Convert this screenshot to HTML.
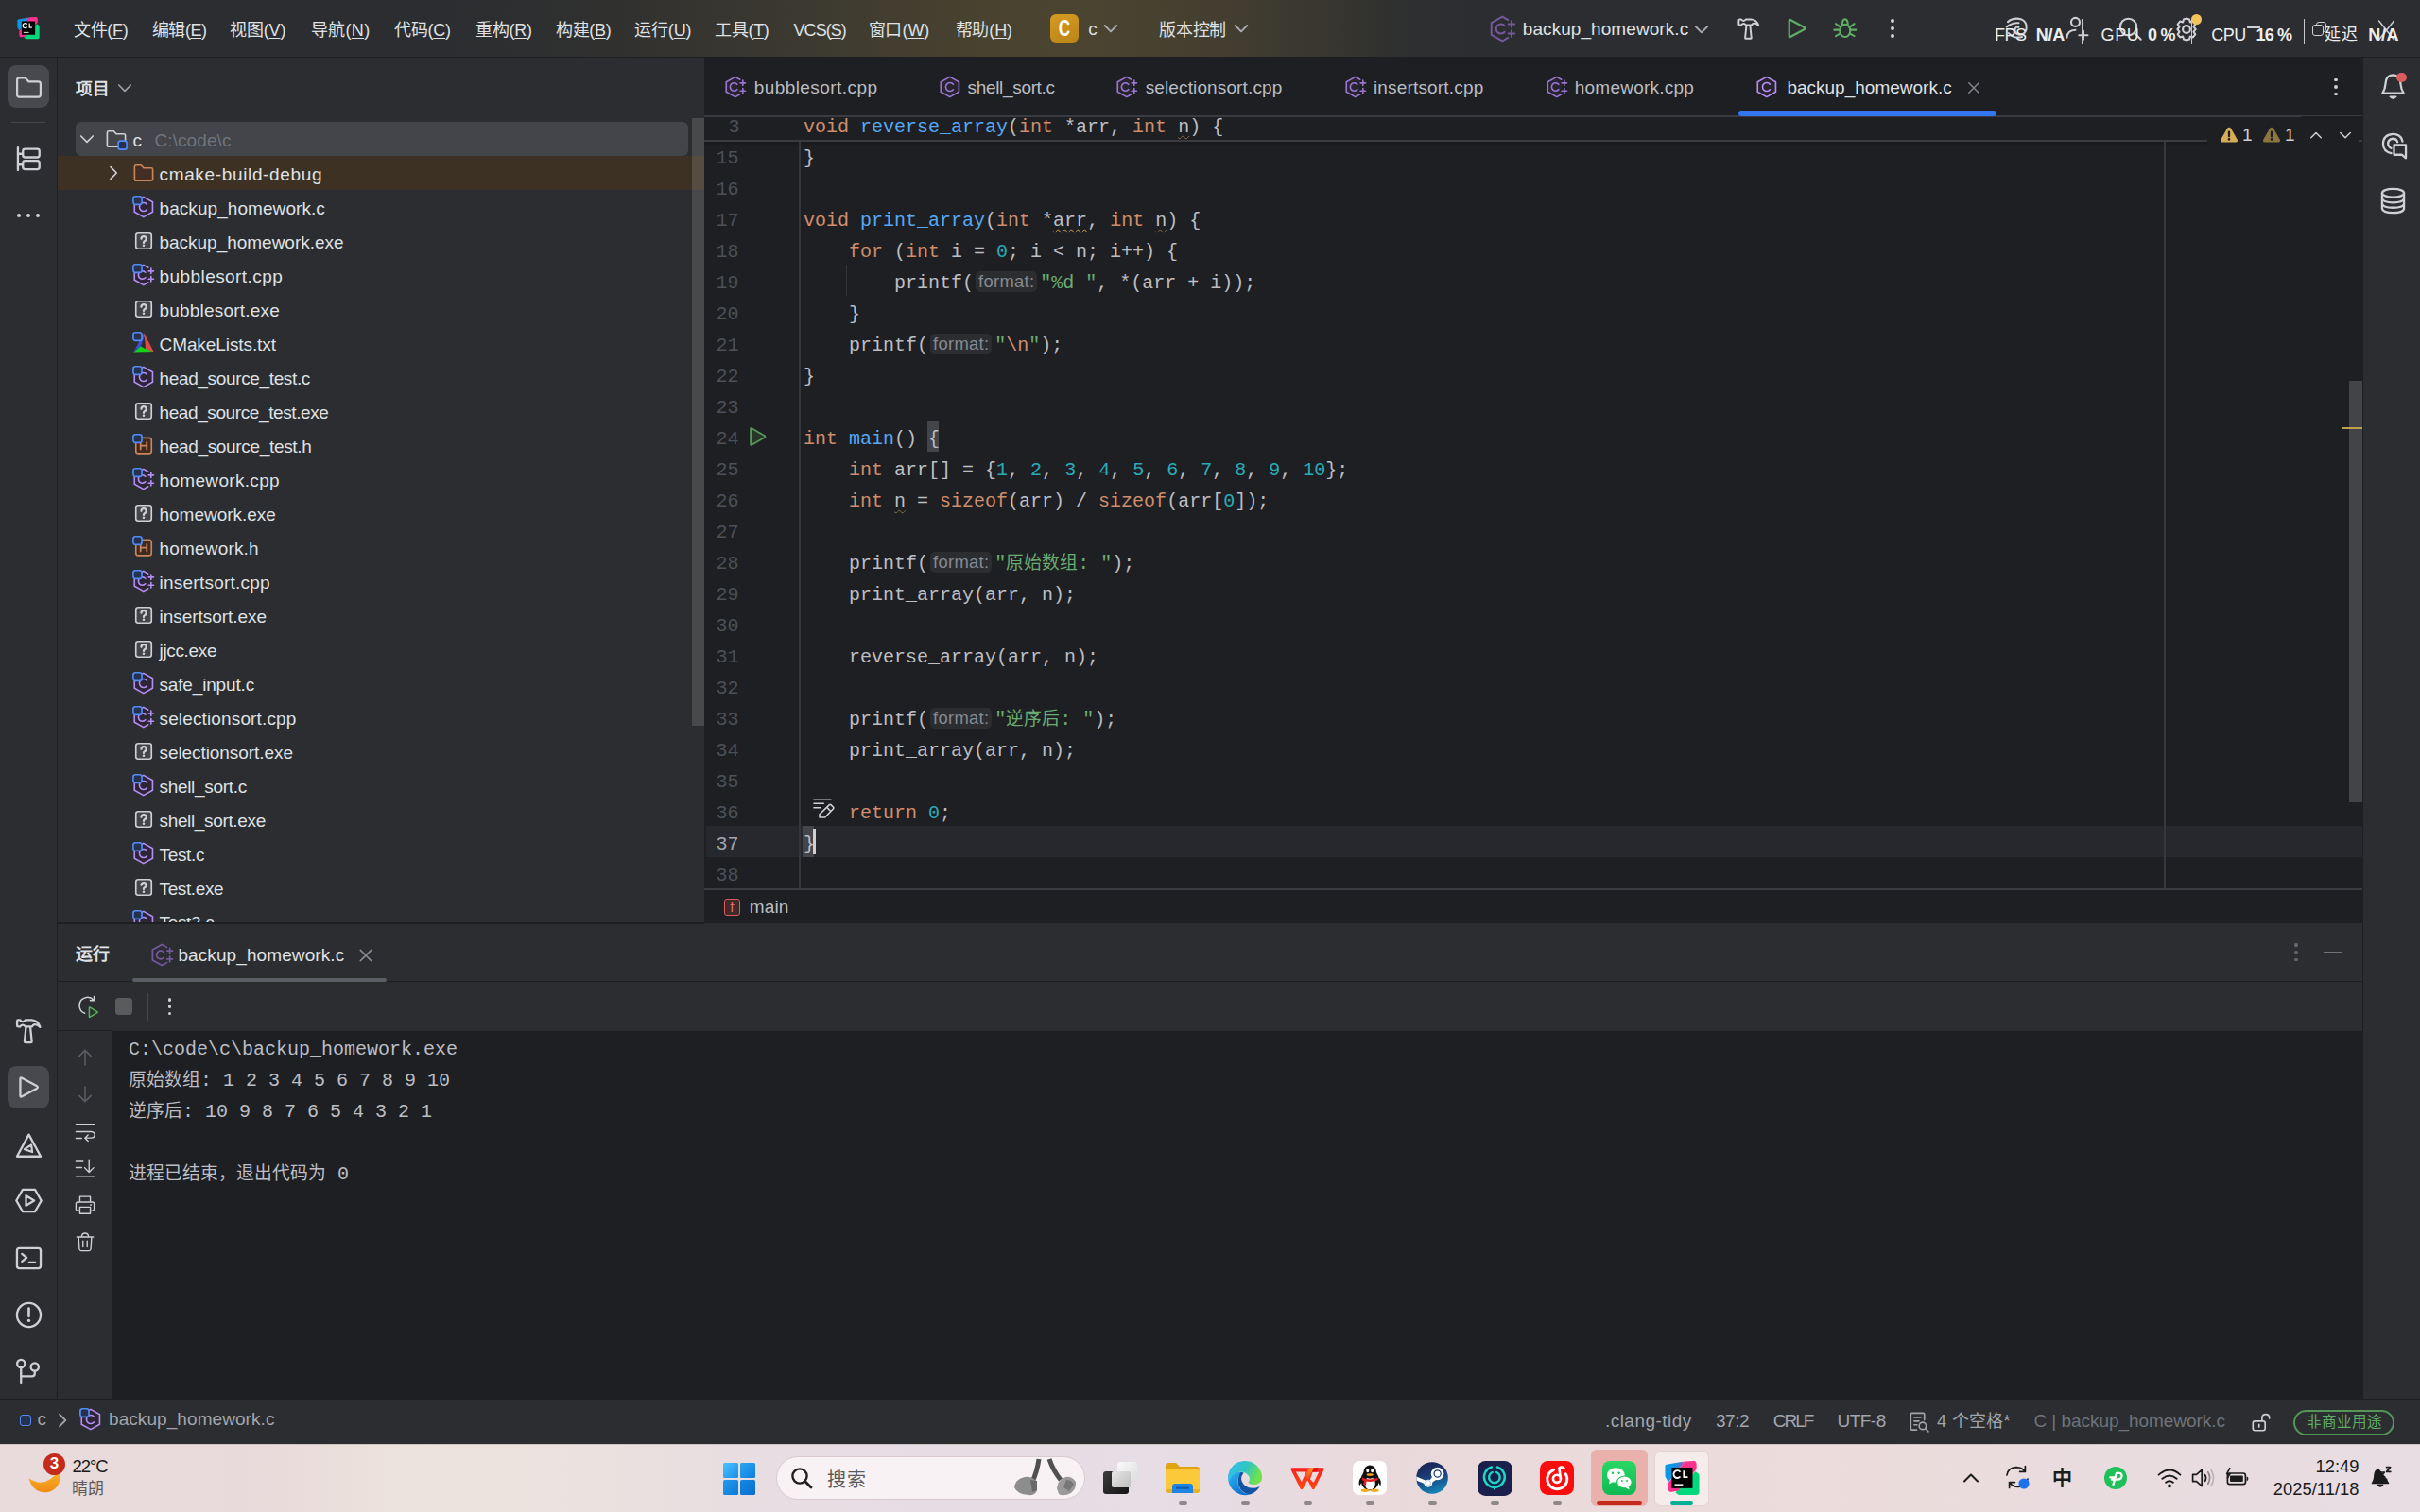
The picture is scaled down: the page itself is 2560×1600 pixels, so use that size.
<!DOCTYPE html>
<html lang="zh-CN"><head><meta charset="utf-8"><title>c – backup_homework.c</title>
<style>
html,body{margin:0;padding:0;}
body{width:2560px;height:1600px;overflow:hidden;background:#2b2d30;font-family:"Liberation Sans",sans-serif;font-size:19px;color:#dfe1e5;}
#root{position:relative;width:2560px;height:1600px;overflow:hidden;}
#root div,#root svg{position:absolute;}
#root svg{overflow:visible;}
.t{white-space:pre;}
.t span{position:static;}
u{text-decoration:underline;text-underline-offset:2px;text-decoration-thickness:1.3px;}
.code .k{color:#cf8e6d;}
.code .f{color:#56a8f5;}
.code .n{color:#2aacb8;}
.code .s{color:#6aab73;}
.code .cj{color:#6aab73;}
.cj{font-size:18.8px;}
.code .w1{text-decoration:underline wavy #c9a84a;text-decoration-thickness:1.2px;text-underline-offset:3px;}
.code .w2{text-decoration:underline wavy #857042;text-decoration-thickness:1.2px;text-underline-offset:3px;}
.hint{display:inline-block;width:65px;height:22.6px;line-height:22.6px;margin:0 3px 0 2.2px;background:#2b2d30;border-radius:5px;color:#868a91;font-family:"Liberation Sans",sans-serif;font-size:18.4px;text-align:center;vertical-align:1.5px;letter-spacing:0.3px;}
</style></head>
<body><div id="root">
<!-- ===== title / main toolbar ===== -->
<div style="left:0px;top:0px;width:2560px;height:60px;background:linear-gradient(90deg,#2b2d30 0,#2b2d30 470px,#30302f 640px,#3b3930 840px,#48422f 1040px,#4a4430 1150px,#433e30 1290px,#37362f 1410px,#2e2f30 1490px,#2b2d30 1560px);"></div>
<div style="left:0px;top:60px;width:2560px;height:1px;background:#1e1f22;"></div>
<svg style="left:18px;top:18px;" width="24" height="24" viewBox="0 0 24 24"><defs><linearGradient id="clbm" x1="0.55" y1="0" x2="1" y2="0.1"><stop offset="0" stop-color="#0a98e6"/><stop offset="1" stop-color="#c24bb0"/></linearGradient></defs><path d="M21 7.2 L23.2 8.8 Q23.7 9.3 23.7 10 V21.6 Q23.6 23.2 22 23.35 H10 Q9 23.3 8.4 22.6 L7.4 21.6 Z" fill="#04d87c"/><path d="M13.9 0.27 L20.2 0 Q21.2 0.1 21.6 1.2 Q21.9 2 21.8 5.6 L9.4 20.4 L4.8 21.3 Q2.6 21.4 2.4 19.4 V15 Z" fill="#ff318c"/><path d="M1.2 2.4 L13.9 0.27 L2.56 14.4 L0.7 11.4 Q0.3 10.8 0.3 10 V3.6 Q0.3 2.6 1.2 2.4 Z" fill="url(#clbm)"/><rect x="4.83" y="4.5" width="14.3" height="14.2" fill="#000"/><path d="M10.7 7.6 A2.55 2.55 0 1 0 10.7 10.7" fill="none" stroke="#fff" stroke-width="1.2"/><path d="M13.2 6.6 V11.1 H15.9" fill="none" stroke="#fff" stroke-width="1.2"/><rect x="6.8" y="15.85" width="5.8" height="0.95" fill="#fff"/></svg>
<div class="t" style="left:78px;top:1.5px;height:60px;line-height:60px;font-size:18px;letter-spacing:-0.317px;color:#dfe1e5;">文件(<u>F</u>)</div>
<div class="t" style="left:160.8px;top:1.5px;height:60px;line-height:60px;font-size:18px;letter-spacing:-0.460px;color:#dfe1e5;">编辑(<u>E</u>)</div>
<div class="t" style="left:242.9px;top:1.5px;height:60px;line-height:60px;font-size:18px;letter-spacing:-0.100px;color:#dfe1e5;">视图(<u>V</u>)</div>
<div class="t" style="left:328.8px;top:1.5px;height:60px;line-height:60px;font-size:18px;letter-spacing:0.340px;color:#dfe1e5;">导航(<u>N</u>)</div>
<div class="t" style="left:417.2px;top:1.5px;height:60px;line-height:60px;font-size:18px;letter-spacing:-0.300px;color:#dfe1e5;">代码(<u>C</u>)</div>
<div class="t" style="left:503px;top:1.5px;height:60px;line-height:60px;font-size:18px;letter-spacing:-0.260px;color:#dfe1e5;">重构(<u>R</u>)</div>
<div class="t" style="left:587.8px;top:1.5px;height:60px;line-height:60px;font-size:18px;letter-spacing:-0.260px;color:#dfe1e5;">构建(<u>B</u>)</div>
<div class="t" style="left:671px;top:1.5px;height:60px;line-height:60px;font-size:18px;letter-spacing:-0.120px;color:#dfe1e5;">运行(<u>U</u>)</div>
<div class="t" style="left:756.3px;top:1.5px;height:60px;line-height:60px;font-size:18px;letter-spacing:-0.377px;color:#dfe1e5;">工具(<u>T</u>)</div>
<div class="t" style="left:839.6px;top:1.5px;height:60px;line-height:60px;font-size:18px;letter-spacing:-0.986px;color:#dfe1e5;">VCS(<u>S</u>)</div>
<div class="t" style="left:918.5px;top:1.5px;height:60px;line-height:60px;font-size:18px;letter-spacing:-0.037px;color:#dfe1e5;">窗口(<u>W</u>)</div>
<div class="t" style="left:1010.5px;top:1.5px;height:60px;line-height:60px;font-size:18px;letter-spacing:-0.100px;color:#dfe1e5;">帮助(<u>H</u>)</div>
<div style="left:1111px;top:15px;width:30px;height:30px;border-radius:6px;background:linear-gradient(160deg,#d59a22,#bb8416);"></div>
<div class="t" style="left:1111px;top:15px;height:30px;line-height:30px;font-size:23px;font-weight:700;width:30px;text-align:center;color:#fff;transform:scaleX(.74);">C</div>
<div class="t" style="left:1151.3px;top:1px;height:60px;line-height:60px;color:#dfe1e5;">c</div>
<svg style="left:1162.5px;top:17.8px;" width="24" height="24" viewBox="0 0 16 16"><path d="M3.8 6 L8 10.2 L12.2 6" fill="none" stroke="#a8abb2" stroke-width="1.25" stroke-linecap="round" stroke-linejoin="round" /></svg>
<div class="t" style="left:1226.2px;top:1.5px;height:60px;line-height:60px;font-size:18px;letter-spacing:-0.300px;color:#dfe1e5;">版本控制</div>
<svg style="left:1301px;top:17.8px;" width="24" height="24" viewBox="0 0 16 16"><path d="M3.8 6 L8 10.2 L12.2 6" fill="none" stroke="#a8abb2" stroke-width="1.25" stroke-linecap="round" stroke-linejoin="round" /></svg>
<svg style="left:1575px;top:15.5px;" width="29" height="29" viewBox="0 0 16 16"><path d="M11.2 2.8 L7.9 0.9 L1.5 4.5 V11.5 L7.9 15.1 L11.2 13.2" stroke="#73599c" stroke-width="1.1" stroke-linecap="round" stroke-linejoin="round"  fill="none"/><path d="M9.2 6.2 A2.8 2.8 0 1 0 9.2 9.8" fill="none" stroke="#73599c" stroke-width="1.1" stroke-linecap="round" stroke-linejoin="round" /><path d="M11.4 5.2 H15 M13.2 3.4 V7 M11.4 10.8 H15 M13.2 9 V12.6" fill="none" stroke="#73599c" stroke-width="1.1" stroke-linecap="round" stroke-linejoin="round" /></svg>
<div class="t" style="left:1610.8px;top:1px;height:60px;line-height:60px;letter-spacing:0.067px;color:#dfe1e5;">backup_homework.c</div>
<svg style="left:1788px;top:18.5px;" width="24" height="24" viewBox="0 0 16 16"><path d="M3.8 6 L8 10.2 L12.2 6" fill="none" stroke="#a8abb2" stroke-width="1.25" stroke-linecap="round" stroke-linejoin="round" /></svg>
<svg style="left:1835px;top:14.5px;" width="30" height="30" viewBox="0 0 20 20"><path d="M2.9 4.3 Q2.9 3.6 3.6 3.6 H4.7 Q5.3 4.7 6.3 4.7 Q7.3 4.7 7.9 3.6 H11.6 Q15.6 3.9 16.8 7.9 Q15 6.3 13.5 6.4 Q12.4 6.6 12 7.7 H7.9 Q7.3 6.6 6.3 6.6 Q5.3 6.6 4.7 7.7 H3.6 Q2.9 7.7 2.9 7 Z" fill="none" stroke="#ced0d6" stroke-width="1.3" stroke-linecap="round" stroke-linejoin="round" /><path d="M8.3 7.9 L7.4 16.6 Q7.4 17.2 8 17.2 H11.2 Q11.8 17.2 11.8 16.6 L10.9 7.9" fill="none" stroke="#ced0d6" stroke-width="1.3" stroke-linecap="round" stroke-linejoin="round" /></svg>
<svg style="left:1886px;top:15px;" width="30" height="30" viewBox="0 0 20 20"><path d="M4.5 4.7 Q4.5 3.5 5.6 4.1 L15.2 9.3 Q16.2 10 15.2 10.7 L5.6 15.9 Q4.5 16.5 4.5 15.3 Z" fill="none" stroke="#5fad65" stroke-width="1.5" stroke-linecap="round" stroke-linejoin="round" /></svg>
<svg style="left:1936.5px;top:15px;" width="30" height="30" viewBox="0 0 20 20"><ellipse cx="9.85" cy="11.6" rx="3.7" ry="4.4" fill="none" stroke="#5fad65" stroke-width="1.4" stroke-linecap="round" stroke-linejoin="round" /><path d="M7.9 7.3 Q7.9 3.6 9.85 3.6 Q11.8 3.6 11.8 7.3 M6.3 8.9 L3.3 6.8 M6.3 11.1 H2.2 M6.5 13.6 L3.3 15.4 M13.4 8.9 L16.4 6.8 M13.4 11.1 H17.5 M13.2 13.6 L16.4 15.4" fill="none" stroke="#5fad65" stroke-width="1.4" stroke-linecap="round" stroke-linejoin="round" /></svg>
<div style="left:2000.1px;top:19.8px;width:4.4px;height:4.4px;border-radius:50%;background:#ced0d6;"></div>
<div style="left:2000.1px;top:27.900000000000002px;width:4.4px;height:4.4px;border-radius:50%;background:#ced0d6;"></div>
<div style="left:2000.1px;top:36.0px;width:4.4px;height:4.4px;border-radius:50%;background:#ced0d6;"></div>
<svg style="left:2118px;top:15px;" width="30" height="30" viewBox="0 0 20 20"><path d="M4 5.4 Q8 2 13.6 3.6 Q17.8 5.6 17 10.6 Q16 14.6 12 14.4 Q8.6 13.8 9 10.8 Q9.6 8.6 11.6 9.2 M3.2 9 Q7 5.8 11.6 6.2 M4.6 13.4 Q8.4 17.6 14 16" fill="none" stroke="#ced0d6" stroke-width="1.4" stroke-linecap="round" stroke-linejoin="round" /></svg>
<svg style="left:2182px;top:15px;" width="30" height="30" viewBox="0 0 20 20"><circle cx="9" cy="5.6" r="3" fill="none" stroke="#ced0d6" stroke-width="1.4" stroke-linecap="round" stroke-linejoin="round" /><path d="M3 16.4 Q3.4 11.4 9 11.2 M11.6 14.8 H17.6 M14.6 11.8 V17.8" fill="none" stroke="#ced0d6" stroke-width="1.4" stroke-linecap="round" stroke-linejoin="round" /></svg>
<svg style="left:2238px;top:15px;" width="30" height="30" viewBox="0 0 20 20"><circle cx="9" cy="9" r="5.8" fill="none" stroke="#ced0d6" stroke-width="1.4" stroke-linecap="round" stroke-linejoin="round" /><path d="M13.2 13.2 L17.8 17.8" fill="none" stroke="#ced0d6" stroke-width="1.4" stroke-linecap="round" stroke-linejoin="round" /></svg>
<svg style="left:2298px;top:16px;" width="30" height="30" viewBox="0 0 20 20"><path d="M10 2.4 L12 3 L12.6 5 L14.6 4.4 L16.2 6.4 L15 8.2 L16.4 10 L15 11.8 L16.2 13.6 L14.6 15.6 L12.6 15 L12 17 L10 17.6 L8 17 L7.4 15 L5.4 15.6 L3.8 13.6 L5 11.8 L3.6 10 L5 8.2 L3.8 6.4 L5.4 4.4 L7.4 5 L8 3 Z" fill="none" stroke="#ced0d6" stroke-width="1.4" stroke-linecap="round" stroke-linejoin="round" /><circle cx="10" cy="10" r="2.6" fill="none" stroke="#ced0d6" stroke-width="1.4" stroke-linecap="round" stroke-linejoin="round" /></svg>
<div style="left:2317.5px;top:15px;width:11px;height:11px;border-radius:50%;background:#f2c55c;"></div>
<div style="left:2376.6px;top:28.4px;width:14px;height:1.4px;background:#ced0d6;"></div>
<div style="left:2449.5px;top:22.6px;width:11.5px;height:11.5px;border:1.4px solid #ced0d6;border-radius:3px;box-sizing:border-box;"></div>
<div style="left:2446px;top:26px;width:11.5px;height:11.5px;border:1.4px solid #ced0d6;border-radius:3px;box-sizing:border-box;background:#2b2d30;"></div>
<svg style="left:2512px;top:20px;" width="24" height="24" viewBox="0 0 24 24"><path d="M4.5 2 L20.5 22 M20.5 2 L4.5 22" fill="none" stroke="#ced0d6" stroke-width="1.4" stroke-linecap="round" stroke-linejoin="round" /></svg>
<div class="t" style="left:2110px;top:13.5px;height:46px;line-height:46px;font-size:18px;letter-spacing:-0.505px;color:#ededed;">FPS</div>
<div class="t" style="left:2153.8px;top:13.5px;height:46px;line-height:46px;font-size:18px;font-weight:700;letter-spacing:-0.267px;color:#ededed;">N/A</div>
<div style="left:2202px;top:20px;width:1.4px;height:27px;background:#c8c8c8;"></div>
<div class="t" style="left:2222.5px;top:13.5px;height:46px;line-height:46px;font-size:18px;letter-spacing:0.661px;color:#ededed;">GPU</div>
<div class="t" style="left:2272px;top:13.5px;height:46px;line-height:46px;font-size:18px;font-weight:700;letter-spacing:-0.744px;color:#ededed;">0 %</div>
<div style="left:2318px;top:20px;width:1.4px;height:27px;background:#c8c8c8;"></div>
<div class="t" style="left:2339.3px;top:13.5px;height:46px;line-height:46px;font-size:18px;letter-spacing:-0.572px;color:#ededed;">CPU</div>
<div class="t" style="left:2386.5px;top:13.5px;height:46px;line-height:46px;font-size:18px;font-weight:700;letter-spacing:-0.833px;color:#ededed;">16 %</div>
<div style="left:2437px;top:20px;width:1.4px;height:27px;background:#c8c8c8;"></div>
<div class="t" style="left:2459.4px;top:13.5px;height:46px;line-height:46px;font-size:17px;letter-spacing:0.150px;color:#ededed;">延迟</div>
<div class="t" style="left:2505.2px;top:13.5px;height:46px;line-height:46px;font-size:18px;font-weight:700;letter-spacing:0.700px;color:#ededed;">N/A</div>
<!-- ===== left tool strip ===== -->
<div style="left:0px;top:61px;width:60px;height:1419px;background:#2b2d30;"></div>
<div style="left:60px;top:61px;width:1px;height:1419px;background:#1e1f22;"></div>
<div style="left:8px;top:69px;width:44px;height:45px;background:#47494e;border-radius:9px;"></div>
<svg style="left:14.5px;top:76.5px;" width="31" height="31" viewBox="0 0 20 20"><path d="M2 5 Q2 3.5 3.5 3.5 H7.6 L9.8 6 H16.5 Q18 6 18 7.5 V15 Q18 16.5 16.5 16.5 H3.5 Q2 16.5 2 15 Z" fill="none" stroke="#ced0d6" stroke-width="1.4" stroke-linecap="round" stroke-linejoin="round" /></svg>
<div style="left:12px;top:129px;width:36px;height:1px;background:#43454a;"></div>
<svg style="left:13.5px;top:151.5px;" width="33" height="33" viewBox="0 0 20 20"><path d="M3 2.5 V17 M3 6.5 H6 M3 13.5 H6" fill="none" stroke="#ced0d6" stroke-width="1.4" stroke-linecap="round" stroke-linejoin="round" /><rect x="6.2" y="3.4" width="10.6" height="5.4" rx="1.4" fill="none" stroke="#ced0d6" stroke-width="1.4" stroke-linecap="round" stroke-linejoin="round" /><rect x="6.2" y="11" width="10.6" height="5.4" rx="1.4" fill="none" stroke="#ced0d6" stroke-width="1.4" stroke-linecap="round" stroke-linejoin="round" /></svg>
<div style="left:17.8px;top:225.7px;width:4.6px;height:4.6px;border-radius:50%;background:#ced0d6;"></div>
<div style="left:27.7px;top:225.7px;width:4.6px;height:4.6px;border-radius:50%;background:#ced0d6;"></div>
<div style="left:37.5px;top:225.7px;width:4.6px;height:4.6px;border-radius:50%;background:#ced0d6;"></div>
<svg style="left:12.5px;top:1072.5px;" width="35" height="35" viewBox="0 0 20 20"><path d="M2.9 4.3 Q2.9 3.6 3.6 3.6 H4.7 Q5.3 4.7 6.3 4.7 Q7.3 4.7 7.9 3.6 H11.6 Q15.6 3.9 16.8 7.9 Q15 6.3 13.5 6.4 Q12.4 6.6 12 7.7 H7.9 Q7.3 6.6 6.3 6.6 Q5.3 6.6 4.7 7.7 H3.6 Q2.9 7.7 2.9 7 Z" fill="none" stroke="#ced0d6" stroke-width="1.3" stroke-linecap="round" stroke-linejoin="round" /><path d="M8.3 7.9 L7.4 16.6 Q7.4 17.2 8 17.2 H11.2 Q11.8 17.2 11.8 16.6 L10.9 7.9" fill="none" stroke="#ced0d6" stroke-width="1.3" stroke-linecap="round" stroke-linejoin="round" /></svg>
<div style="left:8px;top:1128px;width:44px;height:45px;background:#47494e;border-radius:9px;"></div>
<svg style="left:14px;top:1134px;" width="33" height="33" viewBox="0 0 20 20"><path d="M4.5 4.7 Q4.5 3.5 5.6 4.1 L15.2 9.3 Q16.2 10 15.2 10.7 L5.6 15.9 Q4.5 16.5 4.5 15.3 Z" fill="none" stroke="#ced0d6" stroke-width="1.4" stroke-linecap="round" stroke-linejoin="round" /></svg>
<svg style="left:13.5px;top:1195.5px;" width="33" height="33" viewBox="0 0 20 20"><path d="M10 2.8 L17.6 16.8 H2.4 Z" fill="none" stroke="#ced0d6" stroke-width="1.4" stroke-linecap="round" stroke-linejoin="round" /><path d="M11.6 9.4 L7.2 12.2 L12.2 14 Z" fill="none" stroke="#ced0d6" stroke-width="1.3" stroke-linecap="round" stroke-linejoin="round" /></svg>
<svg style="left:13.5px;top:1254px;" width="33" height="33" viewBox="0 0 20 20"><path d="M6 3 H14 L18 10 L14 17 H6 L2 10 Z" fill="none" stroke="#ced0d6" stroke-width="1.4" stroke-linecap="round" stroke-linejoin="round" /><path d="M8.2 6.8 L13.4 10 L8.2 13.2 Z" fill="none" stroke="#ced0d6" stroke-width="1.4" stroke-linecap="round" stroke-linejoin="round" /></svg>
<svg style="left:13.5px;top:1314.5px;" width="33" height="33" viewBox="0 0 20 20"><rect x="2.4" y="3.6" width="15.2" height="12.8" rx="1.6" fill="none" stroke="#ced0d6" stroke-width="1.4" stroke-linecap="round" stroke-linejoin="round" /><path d="M5.6 7.2 L8.6 9.6 L5.6 12 M10.2 12.6 H14" fill="none" stroke="#ced0d6" stroke-width="1.4" stroke-linecap="round" stroke-linejoin="round" /></svg>
<svg style="left:13.5px;top:1374.5px;" width="33" height="33" viewBox="0 0 20 20"><circle cx="10" cy="10" r="7.6" fill="none" stroke="#ced0d6" stroke-width="1.4" stroke-linecap="round" stroke-linejoin="round" /><path d="M10 5.8 V10.8" fill="none" stroke="#ced0d6" stroke-width="1.6" stroke-linecap="round" stroke-linejoin="round" /><circle cx="10" cy="13.6" r="1" fill="#ced0d6"/></svg>
<svg style="left:12.5px;top:1434.5px;" width="33" height="33" viewBox="0 0 20 20"><circle cx="5.6" cy="4.9" r="2.5" fill="none" stroke="#ced0d6" stroke-width="1.4" stroke-linecap="round" stroke-linejoin="round" /><circle cx="14.4" cy="7" r="2.5" fill="none" stroke="#ced0d6" stroke-width="1.4" stroke-linecap="round" stroke-linejoin="round" /><path d="M5.6 7.5 V17.6 M14.4 9.6 V11.2 Q14.4 13 12.6 13 H5.8" fill="none" stroke="#ced0d6" stroke-width="1.4" stroke-linecap="round" stroke-linejoin="round" /></svg>
<!-- ===== project tool window ===== -->
<div style="left:61px;top:61px;width:684px;height:915px;background:#2b2d30;overflow:hidden;">
<div class="t" style="left:19px;top:14.5px;height:36px;line-height:36px;font-size:17.6px;font-weight:700;color:#dfe1e5;">项目</div>
<svg style="left:59px;top:20px;" width="24" height="24" viewBox="0 0 16 16"><path d="M3.8 6 L8 10.2 L12.2 6" fill="none" stroke="#9da0a8" stroke-width="1.1" stroke-linecap="round" stroke-linejoin="round" /></svg>
<div style="left:18.5px;top:68px;width:648px;height:36px;background:#43454a;border-radius:6px;"></div>
<svg style="left:19px;top:74px;" width="24" height="24" viewBox="0 0 16 16"><path d="M3.8 6 L8 10.2 L12.2 6" fill="none" stroke="#ced0d6" stroke-width="1.1" stroke-linecap="round" stroke-linejoin="round" /></svg>
<svg style="left:50px;top:74px;" width="24" height="24" viewBox="0 0 16 16"><path d="M1.6 3.6 Q1.6 2.5 2.7 2.5 H6.2 L8 4.5 H13.3 Q14.4 4.5 14.4 5.6 V12.4 Q14.4 13.5 13.3 13.5 H2.7 Q1.6 13.5 1.6 12.4 Z" fill="none" stroke="#ced0d6" stroke-width="1.1" stroke-linejoin="round"/><rect x="9.4" y="9.4" width="6" height="6" rx="1.6" fill="#25324d" stroke="#548af7" stroke-width="1.1"/></svg>
<div class="t" style="left:79.6px;top:69.69999999999999px;height:36px;line-height:36px;color:#dfe1e5;">c</div>
<div class="t" style="left:102.5px;top:69.69999999999999px;height:36px;line-height:36px;letter-spacing:0.082px;color:#6f737a;">C:\code\c</div>
<div style="left:0px;top:104px;width:684px;height:36px;background:#3d3124;"></div>
<svg style="left:46.5px;top:110px;" width="24" height="24" viewBox="0 0 16 16"><path d="M6 3.8 L10.2 8 L6 12.2" fill="none" stroke="#ced0d6" stroke-width="1.1" stroke-linecap="round" stroke-linejoin="round" /></svg>
<svg style="left:78.6px;top:110px;" width="24" height="24" viewBox="0 0 16 16"><path d="M1.6 3.6 Q1.6 2.5 2.7 2.5 H6.2 L8 4.5 H13.3 Q14.4 4.5 14.4 5.6 V12.4 Q14.4 13.5 13.3 13.5 H2.7 Q1.6 13.5 1.6 12.4 Z" fill="#422e25" stroke="#c9855c" stroke-width="1.1" stroke-linejoin="round"/></svg>
<div class="t" style="left:107.5px;top:105.69999999999999px;height:36px;line-height:36px;letter-spacing:0.653px;color:#dfe1e5;">cmake-build-debug</div>
<svg style="left:78.80000000000001px;top:146px;" width="24" height="24" viewBox="0 0 16 16"><path d="M7.9 0.9 L14.3 4.5 V11.5 L7.9 15.1 L1.5 11.5 V4.5 Z" stroke="#b58cf0" stroke-width="1.1" stroke-linecap="round" stroke-linejoin="round"  fill="#2b2535"/><path d="M10.3 6.1 A3 3 0 1 0 10.3 9.9" fill="none" stroke="#b58cf0" stroke-width="1.1" stroke-linecap="round" stroke-linejoin="round" /><rect x="0.6" y="0.5" width="6.1" height="5.7" rx="1.6" fill="#25324d" stroke="#548af7" stroke-width="1.1"/></svg>
<div class="t" style="left:107.5px;top:141.7px;height:36px;line-height:36px;letter-spacing:0.067px;color:#dfe1e5;">backup_homework.c</div>
<svg style="left:78.80000000000001px;top:182px;" width="24" height="24" viewBox="0 0 16 16"><rect x="2.5" y="2.5" width="11" height="11" rx="1.6" fill="#43454a" stroke="#ced0d6" stroke-width="1.1"/><path d="M6.3 6.5 A1.75 1.75 0 1 1 8.6 8.1 Q8 8.4 8 9.3" fill="none" stroke="#ced0d6" stroke-width="1.5" stroke-linecap="round" stroke-linejoin="round" /><circle cx="8" cy="11.2" r="0.85" fill="#ced0d6"/></svg>
<div class="t" style="left:107.5px;top:177.7px;height:36px;line-height:36px;letter-spacing:-0.021px;color:#dfe1e5;">backup_homework.exe</div>
<svg style="left:78.80000000000001px;top:218px;" width="24" height="24" viewBox="0 0 16 16"><path d="M11.2 2.8 L7.9 0.9 L1.5 4.5 V11.5 L7.9 15.1 L11.2 13.2" stroke="#b58cf0" stroke-width="1.1" stroke-linecap="round" stroke-linejoin="round"  fill="#2b2535"/><path d="M9.2 6.2 A2.8 2.8 0 1 0 9.2 9.8" fill="none" stroke="#b58cf0" stroke-width="1.1" stroke-linecap="round" stroke-linejoin="round" /><path d="M11.4 5.2 H15 M13.2 3.4 V7 M11.4 10.8 H15 M13.2 9 V12.6" fill="none" stroke="#b58cf0" stroke-width="1.1" stroke-linecap="round" stroke-linejoin="round" /><rect x="0.6" y="0.5" width="6.1" height="5.7" rx="1.6" fill="#25324d" stroke="#548af7" stroke-width="1.1"/></svg>
<div class="t" style="left:107.5px;top:213.7px;height:36px;line-height:36px;letter-spacing:0.432px;color:#dfe1e5;">bubblesort.cpp</div>
<svg style="left:78.80000000000001px;top:254px;" width="24" height="24" viewBox="0 0 16 16"><rect x="2.5" y="2.5" width="11" height="11" rx="1.6" fill="#43454a" stroke="#ced0d6" stroke-width="1.1"/><path d="M6.3 6.5 A1.75 1.75 0 1 1 8.6 8.1 Q8 8.4 8 9.3" fill="none" stroke="#ced0d6" stroke-width="1.5" stroke-linecap="round" stroke-linejoin="round" /><circle cx="8" cy="11.2" r="0.85" fill="#ced0d6"/></svg>
<div class="t" style="left:107.5px;top:249.7px;height:36px;line-height:36px;letter-spacing:0.203px;color:#dfe1e5;">bubblesort.exe</div>
<svg style="left:78.80000000000001px;top:290px;" width="24" height="24" viewBox="0 0 16 16"><polygon points="8.1,0.6 0.6,15 6,10.2 8.6,3.5" fill="#3b4fd8"/><polygon points="8.1,0.6 15.4,14.6 9.2,12.2" fill="#e04a4a"/><polygon points="0.6,15 15.4,14.6 6,10.2" fill="#17d317"/><polygon points="8.6,3.5 6,10.2 9.2,12.2" fill="#2b2d30"/><rect x="0.6" y="0.5" width="6.1" height="5.7" rx="1.6" fill="#25324d" stroke="#548af7" stroke-width="1.1"/></svg>
<div class="t" style="left:107.5px;top:285.7px;height:36px;line-height:36px;letter-spacing:-0.085px;color:#dfe1e5;">CMakeLists.txt</div>
<svg style="left:78.80000000000001px;top:326px;" width="24" height="24" viewBox="0 0 16 16"><path d="M7.9 0.9 L14.3 4.5 V11.5 L7.9 15.1 L1.5 11.5 V4.5 Z" stroke="#b58cf0" stroke-width="1.1" stroke-linecap="round" stroke-linejoin="round"  fill="#2b2535"/><path d="M10.3 6.1 A3 3 0 1 0 10.3 9.9" fill="none" stroke="#b58cf0" stroke-width="1.1" stroke-linecap="round" stroke-linejoin="round" /><rect x="0.6" y="0.5" width="6.1" height="5.7" rx="1.6" fill="#25324d" stroke="#548af7" stroke-width="1.1"/></svg>
<div class="t" style="left:107.5px;top:321.7px;height:36px;line-height:36px;letter-spacing:-0.352px;color:#dfe1e5;">head_source_test.c</div>
<svg style="left:78.80000000000001px;top:362px;" width="24" height="24" viewBox="0 0 16 16"><rect x="2.5" y="2.5" width="11" height="11" rx="1.6" fill="#43454a" stroke="#ced0d6" stroke-width="1.1"/><path d="M6.3 6.5 A1.75 1.75 0 1 1 8.6 8.1 Q8 8.4 8 9.3" fill="none" stroke="#ced0d6" stroke-width="1.5" stroke-linecap="round" stroke-linejoin="round" /><circle cx="8" cy="11.2" r="0.85" fill="#ced0d6"/></svg>
<div class="t" style="left:107.5px;top:357.7px;height:36px;line-height:36px;letter-spacing:-0.398px;color:#dfe1e5;">head_source_test.exe</div>
<svg style="left:78.80000000000001px;top:398px;" width="24" height="24" viewBox="0 0 16 16"><rect x="2.5" y="2.9" width="11" height="11" rx="1.8" fill="#40291f" stroke="#c9855c" stroke-width="1.1"/><path d="M5.8 5.9 V11 M10.2 5.9 V11 M5.8 8.45 H10.2" fill="none" stroke="#c9855c" stroke-width="1.2" stroke-linecap="round" stroke-linejoin="round" /><rect x="0.6" y="0.5" width="6.1" height="5.7" rx="1.6" fill="#25324d" stroke="#548af7" stroke-width="1.1"/></svg>
<div class="t" style="left:107.5px;top:393.7px;height:36px;line-height:36px;letter-spacing:-0.328px;color:#dfe1e5;">head_source_test.h</div>
<svg style="left:78.80000000000001px;top:434px;" width="24" height="24" viewBox="0 0 16 16"><path d="M11.2 2.8 L7.9 0.9 L1.5 4.5 V11.5 L7.9 15.1 L11.2 13.2" stroke="#b58cf0" stroke-width="1.1" stroke-linecap="round" stroke-linejoin="round"  fill="#2b2535"/><path d="M9.2 6.2 A2.8 2.8 0 1 0 9.2 9.8" fill="none" stroke="#b58cf0" stroke-width="1.1" stroke-linecap="round" stroke-linejoin="round" /><path d="M11.4 5.2 H15 M13.2 3.4 V7 M11.4 10.8 H15 M13.2 9 V12.6" fill="none" stroke="#b58cf0" stroke-width="1.1" stroke-linecap="round" stroke-linejoin="round" /><rect x="0.6" y="0.5" width="6.1" height="5.7" rx="1.6" fill="#25324d" stroke="#548af7" stroke-width="1.1"/></svg>
<div class="t" style="left:107.5px;top:429.7px;height:36px;line-height:36px;letter-spacing:0.328px;color:#dfe1e5;">homework.cpp</div>
<svg style="left:78.80000000000001px;top:470px;" width="24" height="24" viewBox="0 0 16 16"><rect x="2.5" y="2.5" width="11" height="11" rx="1.6" fill="#43454a" stroke="#ced0d6" stroke-width="1.1"/><path d="M6.3 6.5 A1.75 1.75 0 1 1 8.6 8.1 Q8 8.4 8 9.3" fill="none" stroke="#ced0d6" stroke-width="1.5" stroke-linecap="round" stroke-linejoin="round" /><circle cx="8" cy="11.2" r="0.85" fill="#ced0d6"/></svg>
<div class="t" style="left:107.5px;top:465.70000000000005px;height:36px;line-height:36px;letter-spacing:-0.014px;color:#dfe1e5;">homework.exe</div>
<svg style="left:78.80000000000001px;top:506px;" width="24" height="24" viewBox="0 0 16 16"><rect x="2.5" y="2.9" width="11" height="11" rx="1.8" fill="#40291f" stroke="#c9855c" stroke-width="1.1"/><path d="M5.8 5.9 V11 M10.2 5.9 V11 M5.8 8.45 H10.2" fill="none" stroke="#c9855c" stroke-width="1.2" stroke-linecap="round" stroke-linejoin="round" /><rect x="0.6" y="0.5" width="6.1" height="5.7" rx="1.6" fill="#25324d" stroke="#548af7" stroke-width="1.1"/></svg>
<div class="t" style="left:107.5px;top:501.70000000000005px;height:36px;line-height:36px;letter-spacing:0.180px;color:#dfe1e5;">homework.h</div>
<svg style="left:78.80000000000001px;top:542px;" width="24" height="24" viewBox="0 0 16 16"><path d="M11.2 2.8 L7.9 0.9 L1.5 4.5 V11.5 L7.9 15.1 L11.2 13.2" stroke="#b58cf0" stroke-width="1.1" stroke-linecap="round" stroke-linejoin="round"  fill="#2b2535"/><path d="M9.2 6.2 A2.8 2.8 0 1 0 9.2 9.8" fill="none" stroke="#b58cf0" stroke-width="1.1" stroke-linecap="round" stroke-linejoin="round" /><path d="M11.4 5.2 H15 M13.2 3.4 V7 M11.4 10.8 H15 M13.2 9 V12.6" fill="none" stroke="#b58cf0" stroke-width="1.1" stroke-linecap="round" stroke-linejoin="round" /><rect x="0.6" y="0.5" width="6.1" height="5.7" rx="1.6" fill="#25324d" stroke="#548af7" stroke-width="1.1"/></svg>
<div class="t" style="left:107.5px;top:537.7px;height:36px;line-height:36px;letter-spacing:0.240px;color:#dfe1e5;">insertsort.cpp</div>
<svg style="left:78.80000000000001px;top:578px;" width="24" height="24" viewBox="0 0 16 16"><rect x="2.5" y="2.5" width="11" height="11" rx="1.6" fill="#43454a" stroke="#ced0d6" stroke-width="1.1"/><path d="M6.3 6.5 A1.75 1.75 0 1 1 8.6 8.1 Q8 8.4 8 9.3" fill="none" stroke="#ced0d6" stroke-width="1.5" stroke-linecap="round" stroke-linejoin="round" /><circle cx="8" cy="11.2" r="0.85" fill="#ced0d6"/></svg>
<div class="t" style="left:107.5px;top:573.7px;height:36px;line-height:36px;letter-spacing:-0.046px;color:#dfe1e5;">insertsort.exe</div>
<svg style="left:78.80000000000001px;top:614px;" width="24" height="24" viewBox="0 0 16 16"><rect x="2.5" y="2.5" width="11" height="11" rx="1.6" fill="#43454a" stroke="#ced0d6" stroke-width="1.1"/><path d="M6.3 6.5 A1.75 1.75 0 1 1 8.6 8.1 Q8 8.4 8 9.3" fill="none" stroke="#ced0d6" stroke-width="1.5" stroke-linecap="round" stroke-linejoin="round" /><circle cx="8" cy="11.2" r="0.85" fill="#ced0d6"/></svg>
<div class="t" style="left:107.5px;top:609.7px;height:36px;line-height:36px;letter-spacing:-0.332px;color:#dfe1e5;">jjcc.exe</div>
<svg style="left:78.80000000000001px;top:650px;" width="24" height="24" viewBox="0 0 16 16"><path d="M7.9 0.9 L14.3 4.5 V11.5 L7.9 15.1 L1.5 11.5 V4.5 Z" stroke="#b58cf0" stroke-width="1.1" stroke-linecap="round" stroke-linejoin="round"  fill="#2b2535"/><path d="M10.3 6.1 A3 3 0 1 0 10.3 9.9" fill="none" stroke="#b58cf0" stroke-width="1.1" stroke-linecap="round" stroke-linejoin="round" /><rect x="0.6" y="0.5" width="6.1" height="5.7" rx="1.6" fill="#25324d" stroke="#548af7" stroke-width="1.1"/></svg>
<div class="t" style="left:107.5px;top:645.7px;height:36px;line-height:36px;letter-spacing:-0.164px;color:#dfe1e5;">safe_input.c</div>
<svg style="left:78.80000000000001px;top:686px;" width="24" height="24" viewBox="0 0 16 16"><path d="M11.2 2.8 L7.9 0.9 L1.5 4.5 V11.5 L7.9 15.1 L11.2 13.2" stroke="#b58cf0" stroke-width="1.1" stroke-linecap="round" stroke-linejoin="round"  fill="#2b2535"/><path d="M9.2 6.2 A2.8 2.8 0 1 0 9.2 9.8" fill="none" stroke="#b58cf0" stroke-width="1.1" stroke-linecap="round" stroke-linejoin="round" /><path d="M11.4 5.2 H15 M13.2 3.4 V7 M11.4 10.8 H15 M13.2 9 V12.6" fill="none" stroke="#b58cf0" stroke-width="1.1" stroke-linecap="round" stroke-linejoin="round" /><rect x="0.6" y="0.5" width="6.1" height="5.7" rx="1.6" fill="#25324d" stroke="#548af7" stroke-width="1.1"/></svg>
<div class="t" style="left:107.5px;top:681.7px;height:36px;line-height:36px;letter-spacing:0.142px;color:#dfe1e5;">selectionsort.cpp</div>
<svg style="left:78.80000000000001px;top:722px;" width="24" height="24" viewBox="0 0 16 16"><rect x="2.5" y="2.5" width="11" height="11" rx="1.6" fill="#43454a" stroke="#ced0d6" stroke-width="1.1"/><path d="M6.3 6.5 A1.75 1.75 0 1 1 8.6 8.1 Q8 8.4 8 9.3" fill="none" stroke="#ced0d6" stroke-width="1.5" stroke-linecap="round" stroke-linejoin="round" /><circle cx="8" cy="11.2" r="0.85" fill="#ced0d6"/></svg>
<div class="t" style="left:107.5px;top:717.7px;height:36px;line-height:36px;letter-spacing:-0.069px;color:#dfe1e5;">selectionsort.exe</div>
<svg style="left:78.80000000000001px;top:758px;" width="24" height="24" viewBox="0 0 16 16"><path d="M7.9 0.9 L14.3 4.5 V11.5 L7.9 15.1 L1.5 11.5 V4.5 Z" stroke="#b58cf0" stroke-width="1.1" stroke-linecap="round" stroke-linejoin="round"  fill="#2b2535"/><path d="M10.3 6.1 A3 3 0 1 0 10.3 9.9" fill="none" stroke="#b58cf0" stroke-width="1.1" stroke-linecap="round" stroke-linejoin="round" /><rect x="0.6" y="0.5" width="6.1" height="5.7" rx="1.6" fill="#25324d" stroke="#548af7" stroke-width="1.1"/></svg>
<div class="t" style="left:107.5px;top:753.7px;height:36px;line-height:36px;letter-spacing:-0.309px;color:#dfe1e5;">shell_sort.c</div>
<svg style="left:78.80000000000001px;top:794px;" width="24" height="24" viewBox="0 0 16 16"><rect x="2.5" y="2.5" width="11" height="11" rx="1.6" fill="#43454a" stroke="#ced0d6" stroke-width="1.1"/><path d="M6.3 6.5 A1.75 1.75 0 1 1 8.6 8.1 Q8 8.4 8 9.3" fill="none" stroke="#ced0d6" stroke-width="1.5" stroke-linecap="round" stroke-linejoin="round" /><circle cx="8" cy="11.2" r="0.85" fill="#ced0d6"/></svg>
<div class="t" style="left:107.5px;top:789.7px;height:36px;line-height:36px;letter-spacing:-0.345px;color:#dfe1e5;">shell_sort.exe</div>
<svg style="left:78.80000000000001px;top:830px;" width="24" height="24" viewBox="0 0 16 16"><path d="M7.9 0.9 L14.3 4.5 V11.5 L7.9 15.1 L1.5 11.5 V4.5 Z" stroke="#b58cf0" stroke-width="1.1" stroke-linecap="round" stroke-linejoin="round"  fill="#2b2535"/><path d="M10.3 6.1 A3 3 0 1 0 10.3 9.9" fill="none" stroke="#b58cf0" stroke-width="1.1" stroke-linecap="round" stroke-linejoin="round" /><rect x="0.6" y="0.5" width="6.1" height="5.7" rx="1.6" fill="#25324d" stroke="#548af7" stroke-width="1.1"/></svg>
<div class="t" style="left:107.5px;top:825.7px;height:36px;line-height:36px;letter-spacing:-0.337px;color:#dfe1e5;">Test.c</div>
<svg style="left:78.80000000000001px;top:866px;" width="24" height="24" viewBox="0 0 16 16"><rect x="2.5" y="2.5" width="11" height="11" rx="1.6" fill="#43454a" stroke="#ced0d6" stroke-width="1.1"/><path d="M6.3 6.5 A1.75 1.75 0 1 1 8.6 8.1 Q8 8.4 8 9.3" fill="none" stroke="#ced0d6" stroke-width="1.5" stroke-linecap="round" stroke-linejoin="round" /><circle cx="8" cy="11.2" r="0.85" fill="#ced0d6"/></svg>
<div class="t" style="left:107.5px;top:861.7px;height:36px;line-height:36px;letter-spacing:-0.371px;color:#dfe1e5;">Test.exe</div>
<svg style="left:78.80000000000001px;top:902px;" width="24" height="24" viewBox="0 0 16 16"><path d="M7.9 0.9 L14.3 4.5 V11.5 L7.9 15.1 L1.5 11.5 V4.5 Z" stroke="#b58cf0" stroke-width="1.1" stroke-linecap="round" stroke-linejoin="round"  fill="#2b2535"/><path d="M10.3 6.1 A3 3 0 1 0 10.3 9.9" fill="none" stroke="#b58cf0" stroke-width="1.1" stroke-linecap="round" stroke-linejoin="round" /><rect x="0.6" y="0.5" width="6.1" height="5.7" rx="1.6" fill="#25324d" stroke="#548af7" stroke-width="1.1"/></svg>
<div class="t" style="left:107.5px;top:897.7px;height:36px;line-height:36px;letter-spacing:-0.315px;color:#dfe1e5;">Test2.c</div>
<div style="left:671px;top:64px;width:12.5px;height:643px;background:rgba(255,255,255,.135);"></div>
</div>
<div style="left:61px;top:976px;width:684px;height:2px;background:#1e1f22;"></div>
<!-- ===== editor ===== -->
<div style="left:745px;top:61px;width:1755px;height:916px;background:#1e1f22;"></div>
<svg style="left:766px;top:79.5px;" width="24" height="24" viewBox="0 0 16 16"><path d="M11.2 2.8 L7.9 0.9 L1.5 4.5 V11.5 L7.9 15.1 L11.2 13.2" stroke="#9a75d0" stroke-width="1.1" stroke-linecap="round" stroke-linejoin="round"  fill="#28242f"/><path d="M9.2 6.2 A2.8 2.8 0 1 0 9.2 9.8" fill="none" stroke="#9a75d0" stroke-width="1.1" stroke-linecap="round" stroke-linejoin="round" /><path d="M11.4 5.2 H15 M13.2 3.4 V7 M11.4 10.8 H15 M13.2 9 V12.6" fill="none" stroke="#9a75d0" stroke-width="1.1" stroke-linecap="round" stroke-linejoin="round" /></svg>
<div class="t" style="left:797.7px;top:74.5px;height:36px;line-height:36px;letter-spacing:0.432px;color:#b9bcc3;">bubblesort.cpp</div>
<svg style="left:992.5px;top:79.5px;" width="24" height="24" viewBox="0 0 16 16"><path d="M7.9 0.9 L14.3 4.5 V11.5 L7.9 15.1 L1.5 11.5 V4.5 Z" stroke="#9a75d0" stroke-width="1.1" stroke-linecap="round" stroke-linejoin="round"  fill="#28242f"/><path d="M10.3 6.1 A3 3 0 1 0 10.3 9.9" fill="none" stroke="#9a75d0" stroke-width="1.1" stroke-linecap="round" stroke-linejoin="round" /></svg>
<div class="t" style="left:1023.6px;top:74.5px;height:36px;line-height:36px;letter-spacing:-0.334px;color:#b9bcc3;">shell_sort.c</div>
<svg style="left:1180px;top:79.5px;" width="24" height="24" viewBox="0 0 16 16"><path d="M11.2 2.8 L7.9 0.9 L1.5 4.5 V11.5 L7.9 15.1 L11.2 13.2" stroke="#9a75d0" stroke-width="1.1" stroke-linecap="round" stroke-linejoin="round"  fill="#28242f"/><path d="M9.2 6.2 A2.8 2.8 0 1 0 9.2 9.8" fill="none" stroke="#9a75d0" stroke-width="1.1" stroke-linecap="round" stroke-linejoin="round" /><path d="M11.4 5.2 H15 M13.2 3.4 V7 M11.4 10.8 H15 M13.2 9 V12.6" fill="none" stroke="#9a75d0" stroke-width="1.1" stroke-linecap="round" stroke-linejoin="round" /></svg>
<div class="t" style="left:1211.7px;top:74.5px;height:36px;line-height:36px;letter-spacing:0.125px;color:#b9bcc3;">selectionsort.cpp</div>
<svg style="left:1421.5px;top:79.5px;" width="24" height="24" viewBox="0 0 16 16"><path d="M11.2 2.8 L7.9 0.9 L1.5 4.5 V11.5 L7.9 15.1 L11.2 13.2" stroke="#9a75d0" stroke-width="1.1" stroke-linecap="round" stroke-linejoin="round"  fill="#28242f"/><path d="M9.2 6.2 A2.8 2.8 0 1 0 9.2 9.8" fill="none" stroke="#9a75d0" stroke-width="1.1" stroke-linecap="round" stroke-linejoin="round" /><path d="M11.4 5.2 H15 M13.2 3.4 V7 M11.4 10.8 H15 M13.2 9 V12.6" fill="none" stroke="#9a75d0" stroke-width="1.1" stroke-linecap="round" stroke-linejoin="round" /></svg>
<div class="t" style="left:1452.9px;top:74.5px;height:36px;line-height:36px;letter-spacing:0.175px;color:#b9bcc3;">insertsort.cpp</div>
<svg style="left:1634.5px;top:79.5px;" width="24" height="24" viewBox="0 0 16 16"><path d="M11.2 2.8 L7.9 0.9 L1.5 4.5 V11.5 L7.9 15.1 L11.2 13.2" stroke="#9a75d0" stroke-width="1.1" stroke-linecap="round" stroke-linejoin="round"  fill="#28242f"/><path d="M9.2 6.2 A2.8 2.8 0 1 0 9.2 9.8" fill="none" stroke="#9a75d0" stroke-width="1.1" stroke-linecap="round" stroke-linejoin="round" /><path d="M11.4 5.2 H15 M13.2 3.4 V7 M11.4 10.8 H15 M13.2 9 V12.6" fill="none" stroke="#9a75d0" stroke-width="1.1" stroke-linecap="round" stroke-linejoin="round" /></svg>
<div class="t" style="left:1665.8px;top:74.5px;height:36px;line-height:36px;letter-spacing:0.220px;color:#b9bcc3;">homework.cpp</div>
<svg style="left:1857.3px;top:79.5px;" width="24" height="24" viewBox="0 0 16 16"><path d="M7.9 0.9 L14.3 4.5 V11.5 L7.9 15.1 L1.5 11.5 V4.5 Z" stroke="#b58cf0" stroke-width="1.1" stroke-linecap="round" stroke-linejoin="round"  fill="#28242f"/><path d="M10.3 6.1 A3 3 0 1 0 10.3 9.9" fill="none" stroke="#b58cf0" stroke-width="1.1" stroke-linecap="round" stroke-linejoin="round" /></svg>
<div class="t" style="left:1890.4px;top:74.5px;height:36px;line-height:36px;letter-spacing:0.002px;color:#dfe1e5;">backup_homework.c</div>
<svg style="left:2077px;top:81.7px;" width="22" height="22" viewBox="0 0 16 16"><path d="M4.2 4.2 L11.8 11.8 M11.8 4.2 L4.2 11.8" fill="none" stroke="#7e828a" stroke-width="1.1" stroke-linecap="round" stroke-linejoin="round" /></svg>
<div style="left:2468.9px;top:82.6px;width:3.8px;height:3.8px;border-radius:50%;background:#ced0d6;"></div>
<div style="left:2468.9px;top:90.1px;width:3.8px;height:3.8px;border-radius:50%;background:#ced0d6;"></div>
<div style="left:2468.9px;top:97.5px;width:3.8px;height:3.8px;border-radius:50%;background:#ced0d6;"></div>
<div style="left:745px;top:121.5px;width:1689px;height:2.2px;background:#393b40;"></div>
<div style="left:2434px;top:121.5px;width:65px;height:1.2px;background:#393b40;"></div>
<div style="left:1839.2px;top:117px;width:272.6px;height:5.6px;background:#3574f0;border-radius:3px;"></div>
<div style="left:745px;top:148px;width:1590px;height:1.6px;background:#393b40;"></div>
<div style="left:745px;top:149.6px;width:1590px;height:5px;background:linear-gradient(#19191c,#1e1f22);"></div>
<div class="t" style="left:745px;top:117.5px;height:33px;line-height:33px;font-size:20px;font-family:'Liberation Mono',monospace;width:37.4px;text-align:right;color:#4b5059;">3</div>
<div class="t code" style="left:850px;top:118px;height:33px;line-height:33px;font-size:20px;font-family:'Liberation Mono',monospace;color:#bcbec4;"><span class="k">void</span> <span class="f">reverse_array</span>(<span class="k">int</span> *arr, <span class="k">int</span> <span class="w2">n</span>) {</div>
<svg style="left:2348px;top:131.9px;" width="20" height="20.6" viewBox="0 0 16 16"><path d="M8 2 Q9.1 2 9.7 3 L14.9 12.2 Q15.9 14.4 13.6 14.6 H2.4 Q0.1 14.4 1.1 12.2 L6.3 3 Q6.9 2 8 2 Z" fill="#d6ae58"/><path d="M8 5.8 V9.6" stroke="#1e1f22" stroke-width="1.8" stroke-linecap="round"/><circle cx="8" cy="12.1" r="1.05" fill="#1e1f22"/></svg>
<div class="t" style="left:2372px;top:126px;height:33px;line-height:33px;color:#ced0d6;">1</div>
<svg style="left:2393px;top:131.9px;" width="20" height="20.6" viewBox="0 0 16 16"><path d="M8 2 Q9.1 2 9.7 3 L14.9 12.2 Q15.9 14.4 13.6 14.6 H2.4 Q0.1 14.4 1.1 12.2 L6.3 3 Q6.9 2 8 2 Z" fill="#8c753f"/><path d="M8 5.8 V9.6" stroke="#1e1f22" stroke-width="1.8" stroke-linecap="round"/><circle cx="8" cy="12.1" r="1.05" fill="#1e1f22"/></svg>
<div class="t" style="left:2417px;top:126px;height:33px;line-height:33px;color:#ced0d6;">1</div>
<svg style="left:2440px;top:132.9px;" width="20" height="20" viewBox="0 0 16 16"><path d="M3.8 10.2 L8 6 L12.2 10.2" fill="none" stroke="#ced0d6" stroke-width="1.2" stroke-linecap="round" stroke-linejoin="round" /></svg>
<svg style="left:2471px;top:132.9px;" width="20" height="20" viewBox="0 0 16 16"><path d="M3.8 6 L8 10.2 L12.2 6" fill="none" stroke="#ced0d6" stroke-width="1.2" stroke-linecap="round" stroke-linejoin="round" /></svg>
<div style="left:2496px;top:148.4px;width:3px;height:1.4px;background:#393b40;"></div>
<div style="left:746.5px;top:874px;width:1753px;height:33px;background:#26282e;"></div>
<div style="left:845.3px;top:150px;width:1.8px;height:791px;background:#34363b;"></div>
<div style="left:2289.4px;top:150px;width:1.6px;height:791px;background:#36383d;"></div>
<div style="left:981px;top:445px;width:12.4px;height:33px;background:#43454a;"></div>
<div style="left:849px;top:874px;width:12.4px;height:33px;background:#43454a;"></div>
<div class="t" style="left:745px;top:151px;height:33px;line-height:33px;font-size:20px;font-family:'Liberation Mono',monospace;width:36.4px;text-align:right;color:#4b5059;">15</div>
<div class="t code" style="left:850px;top:151px;height:33px;line-height:33px;font-size:20px;font-family:'Liberation Mono',monospace;color:#bcbec4;">}</div>
<div class="t" style="left:745px;top:184px;height:33px;line-height:33px;font-size:20px;font-family:'Liberation Mono',monospace;width:36.4px;text-align:right;color:#4b5059;">16</div>
<div class="t" style="left:745px;top:217px;height:33px;line-height:33px;font-size:20px;font-family:'Liberation Mono',monospace;width:36.4px;text-align:right;color:#4b5059;">17</div>
<div class="t code" style="left:850px;top:217px;height:33px;line-height:33px;font-size:20px;font-family:'Liberation Mono',monospace;color:#bcbec4;"><span class="k">void</span> <span class="f">print_array</span>(<span class="k">int</span> *<span class="w1">arr</span>, <span class="k">int</span> <span class="w2">n</span>) {</div>
<div class="t" style="left:745px;top:250px;height:33px;line-height:33px;font-size:20px;font-family:'Liberation Mono',monospace;width:36.4px;text-align:right;color:#4b5059;">18</div>
<div class="t code" style="left:850px;top:250px;height:33px;line-height:33px;font-size:20px;font-family:'Liberation Mono',monospace;color:#bcbec4;">    <span class="k">for</span> (<span class="k">int</span> i = <span class="n">0</span>; i &lt; n; i++) {</div>
<div class="t" style="left:745px;top:283px;height:33px;line-height:33px;font-size:20px;font-family:'Liberation Mono',monospace;width:36.4px;text-align:right;color:#4b5059;">19</div>
<div class="t code" style="left:850px;top:283px;height:33px;line-height:33px;font-size:20px;font-family:'Liberation Mono',monospace;color:#bcbec4;">        printf(<span class="hint">format:</span><span class="s">"%d "</span>, *(arr + i));</div>
<div class="t" style="left:745px;top:316px;height:33px;line-height:33px;font-size:20px;font-family:'Liberation Mono',monospace;width:36.4px;text-align:right;color:#4b5059;">20</div>
<div class="t code" style="left:850px;top:316px;height:33px;line-height:33px;font-size:20px;font-family:'Liberation Mono',monospace;color:#bcbec4;">    }</div>
<div class="t" style="left:745px;top:349px;height:33px;line-height:33px;font-size:20px;font-family:'Liberation Mono',monospace;width:36.4px;text-align:right;color:#4b5059;">21</div>
<div class="t code" style="left:850px;top:349px;height:33px;line-height:33px;font-size:20px;font-family:'Liberation Mono',monospace;color:#bcbec4;">    printf(<span class="hint">format:</span><span class="s">"</span><span class="k">\n</span><span class="s">"</span>);</div>
<div class="t" style="left:745px;top:382px;height:33px;line-height:33px;font-size:20px;font-family:'Liberation Mono',monospace;width:36.4px;text-align:right;color:#4b5059;">22</div>
<div class="t code" style="left:850px;top:382px;height:33px;line-height:33px;font-size:20px;font-family:'Liberation Mono',monospace;color:#bcbec4;">}</div>
<div class="t" style="left:745px;top:415px;height:33px;line-height:33px;font-size:20px;font-family:'Liberation Mono',monospace;width:36.4px;text-align:right;color:#4b5059;">23</div>
<div class="t" style="left:745px;top:448px;height:33px;line-height:33px;font-size:20px;font-family:'Liberation Mono',monospace;width:36.4px;text-align:right;color:#4b5059;">24</div>
<div class="t code" style="left:850px;top:448px;height:33px;line-height:33px;font-size:20px;font-family:'Liberation Mono',monospace;color:#bcbec4;"><span class="k">int</span> <span class="f">main</span>() <span class="br">{</span></div>
<div class="t" style="left:745px;top:481px;height:33px;line-height:33px;font-size:20px;font-family:'Liberation Mono',monospace;width:36.4px;text-align:right;color:#4b5059;">25</div>
<div class="t code" style="left:850px;top:481px;height:33px;line-height:33px;font-size:20px;font-family:'Liberation Mono',monospace;color:#bcbec4;">    <span class="k">int</span> arr[] = {<span class="n">1</span>, <span class="n">2</span>, <span class="n">3</span>, <span class="n">4</span>, <span class="n">5</span>, <span class="n">6</span>, <span class="n">7</span>, <span class="n">8</span>, <span class="n">9</span>, <span class="n">10</span>};</div>
<div class="t" style="left:745px;top:514px;height:33px;line-height:33px;font-size:20px;font-family:'Liberation Mono',monospace;width:36.4px;text-align:right;color:#4b5059;">26</div>
<div class="t code" style="left:850px;top:514px;height:33px;line-height:33px;font-size:20px;font-family:'Liberation Mono',monospace;color:#bcbec4;">    <span class="k">int</span> <span class="w2">n</span> = <span class="k">sizeof</span>(arr) / <span class="k">sizeof</span>(arr[<span class="n">0</span>]);</div>
<div class="t" style="left:745px;top:547px;height:33px;line-height:33px;font-size:20px;font-family:'Liberation Mono',monospace;width:36.4px;text-align:right;color:#4b5059;">27</div>
<div class="t" style="left:745px;top:580px;height:33px;line-height:33px;font-size:20px;font-family:'Liberation Mono',monospace;width:36.4px;text-align:right;color:#4b5059;">28</div>
<div class="t code" style="left:850px;top:580px;height:33px;line-height:33px;font-size:20px;font-family:'Liberation Mono',monospace;color:#bcbec4;">    printf(<span class="hint">format:</span><span class="s">"</span><span class="cj">原始数组</span><span class="s">: "</span>);</div>
<div class="t" style="left:745px;top:613px;height:33px;line-height:33px;font-size:20px;font-family:'Liberation Mono',monospace;width:36.4px;text-align:right;color:#4b5059;">29</div>
<div class="t code" style="left:850px;top:613px;height:33px;line-height:33px;font-size:20px;font-family:'Liberation Mono',monospace;color:#bcbec4;">    print_array(arr, n);</div>
<div class="t" style="left:745px;top:646px;height:33px;line-height:33px;font-size:20px;font-family:'Liberation Mono',monospace;width:36.4px;text-align:right;color:#4b5059;">30</div>
<div class="t" style="left:745px;top:679px;height:33px;line-height:33px;font-size:20px;font-family:'Liberation Mono',monospace;width:36.4px;text-align:right;color:#4b5059;">31</div>
<div class="t code" style="left:850px;top:679px;height:33px;line-height:33px;font-size:20px;font-family:'Liberation Mono',monospace;color:#bcbec4;">    reverse_array(arr, n);</div>
<div class="t" style="left:745px;top:712px;height:33px;line-height:33px;font-size:20px;font-family:'Liberation Mono',monospace;width:36.4px;text-align:right;color:#4b5059;">32</div>
<div class="t" style="left:745px;top:745px;height:33px;line-height:33px;font-size:20px;font-family:'Liberation Mono',monospace;width:36.4px;text-align:right;color:#4b5059;">33</div>
<div class="t code" style="left:850px;top:745px;height:33px;line-height:33px;font-size:20px;font-family:'Liberation Mono',monospace;color:#bcbec4;">    printf(<span class="hint">format:</span><span class="s">"</span><span class="cj">逆序后</span><span class="s">: "</span>);</div>
<div class="t" style="left:745px;top:778px;height:33px;line-height:33px;font-size:20px;font-family:'Liberation Mono',monospace;width:36.4px;text-align:right;color:#4b5059;">34</div>
<div class="t code" style="left:850px;top:778px;height:33px;line-height:33px;font-size:20px;font-family:'Liberation Mono',monospace;color:#bcbec4;">    print_array(arr, n);</div>
<div class="t" style="left:745px;top:811px;height:33px;line-height:33px;font-size:20px;font-family:'Liberation Mono',monospace;width:36.4px;text-align:right;color:#4b5059;">35</div>
<div class="t" style="left:745px;top:844px;height:33px;line-height:33px;font-size:20px;font-family:'Liberation Mono',monospace;width:36.4px;text-align:right;color:#4b5059;">36</div>
<div class="t code" style="left:850px;top:844px;height:33px;line-height:33px;font-size:20px;font-family:'Liberation Mono',monospace;color:#bcbec4;">    <span class="k">return</span> <span class="n">0</span>;</div>
<div class="t" style="left:745px;top:877px;height:33px;line-height:33px;font-size:20px;font-family:'Liberation Mono',monospace;width:36.4px;text-align:right;color:#a1a3ab;">37</div>
<div class="t code" style="left:850px;top:877px;height:33px;line-height:33px;font-size:20px;font-family:'Liberation Mono',monospace;color:#bcbec4;"><span class="br">}</span></div>
<div class="t" style="left:745px;top:910px;height:33px;line-height:33px;font-size:20px;font-family:'Liberation Mono',monospace;width:36.4px;text-align:right;color:#4b5059;">38</div>
<div style="left:894.6px;top:280px;width:1.4px;height:33px;background:#313438;"></div>
<svg style="left:789px;top:450px;" width="24" height="24" viewBox="0 0 16 16"><path d="M3.4 2.6 Q3.4 1.8 4.1 2.2 L13.4 7.5 Q13.9 8 13.4 8.5 L4.1 13.8 Q3.4 14.2 3.4 13.4 Z" stroke="#57965c" stroke-width="1.2" stroke-linecap="round" stroke-linejoin="round"  fill="#253627"/></svg>
<svg style="left:859px;top:843px;" width="26" height="24" viewBox="0 0 26 24"><path d="M2 2.8 H20 M2 7.3 H12.3 M2 11.7 H9.3" fill="none" stroke="#ced0d6" stroke-width="1.6" stroke-linecap="round" stroke-linejoin="round" /><path d="M8 18.7 L18.4 8.6 Q19.2 7.9 20 8.6 L22.6 11.2 Q23.3 12 22.6 12.7 L13.7 22 H8 Z M16 11.6 L19.6 15.2" fill="none" stroke="#ced0d6" stroke-width="1.6" stroke-linecap="round" stroke-linejoin="round" /></svg>
<div style="left:860.2px;top:877.2px;width:2.8px;height:27px;background:#ced0d6;"></div>
<div style="left:2485.2px;top:403px;width:13.4px;height:446px;background:#434447;"></div>
<div style="left:2478px;top:451.6px;width:20.6px;height:2.8px;background:#bf9f47;"></div>
<div style="left:745px;top:939.6px;width:1755px;height:2px;background:#393b40;"></div>
<div style="left:765.5px;top:951px;width:17.5px;height:17.5px;border:1.4px solid #db5c5c;border-radius:3px;box-sizing:border-box;background:#402929;"></div>
<div class="t" style="left:765.5px;top:950.5px;height:18px;line-height:18px;font-size:15px;width:17.5px;text-align:center;color:#e26b6b;">f</div>
<div class="t" style="left:792.7px;top:942px;height:36px;line-height:36px;letter-spacing:0.178px;color:#bcbec4;">main</div>
<div style="left:2499px;top:61px;width:1px;height:1419px;background:#1e1f22;"></div>
<div style="left:2500px;top:61px;width:60px;height:1419px;background:#2b2d30;"></div>
<svg style="left:2514.5px;top:75px;" width="33" height="33" viewBox="0 0 20 20"><path d="M10 2.6 Q5.4 2.8 5.2 8 Q5 11.6 3.2 14.4 H16.8 Q15 11.6 14.8 8 Q14.6 2.8 10 2.6 Z" fill="none" stroke="#ced0d6" stroke-width="1.4" stroke-linecap="round" stroke-linejoin="round" /><path d="M8.2 16.6 Q10 18.4 11.8 16.6 Z" fill="none" stroke="#ced0d6" stroke-width="1.2" stroke-linecap="round" stroke-linejoin="round"  /></svg>
<div style="left:2535px;top:76.5px;width:10.6px;height:10.6px;border-radius:50%;background:#db5c5c;"></div>
<svg style="left:2515.5px;top:136.5px;" width="33" height="33" viewBox="0 0 20 20"><path d="M15.4 7.6 Q14.4 2.8 9.2 2.9 Q3 3.4 3 9.4 Q3.2 14.2 8.2 15.2" fill="none" stroke="#ced0d6" stroke-width="1.4" stroke-linecap="round" stroke-linejoin="round" /><path d="M12.2 8 Q11.6 5.9 9.2 5.9 Q6 6.3 6.2 9.4 Q6.4 11.4 8.2 12" fill="none" stroke="#ced0d6" stroke-width="1.4" stroke-linecap="round" stroke-linejoin="round" /><path d="M10 10 H17.6 V18.4 L15 16.2 H10 Z" fill="#2b2d30" stroke="#ced0d6" stroke-width="1.4" stroke-linejoin="round"/></svg>
<svg style="left:2514.5px;top:195.5px;" width="33" height="33" viewBox="0 0 20 20"><ellipse cx="10" cy="5" rx="7" ry="2.7" fill="none" stroke="#ced0d6" stroke-width="1.4" stroke-linecap="round" stroke-linejoin="round" /><path d="M3 5 V15 Q3.4 17.6 10 17.7 Q16.6 17.6 17 15 V5 M3 8.4 Q3.4 11 10 11.1 Q16.6 11 17 8.4 M3 11.7 Q3.4 14.3 10 14.4 Q16.6 14.3 17 11.7" fill="none" stroke="#ced0d6" stroke-width="1.4" stroke-linecap="round" stroke-linejoin="round" /></svg>
<!-- ===== run tool window ===== -->
<div style="left:61px;top:978px;width:2438px;height:502px;background:#2b2d30;"></div>
<div class="t" style="left:80px;top:992px;height:36px;line-height:36px;font-size:18px;font-weight:700;letter-spacing:0.100px;color:#dfe1e5;">运行</div>
<svg style="left:158.5px;top:998px;" width="25" height="25" viewBox="0 0 16 16"><path d="M11.2 2.8 L7.9 0.9 L1.5 4.5 V11.5 L7.9 15.1 L11.2 13.2" stroke="#73599c" stroke-width="1.1" stroke-linecap="round" stroke-linejoin="round"  fill="none"/><path d="M9.2 6.2 A2.8 2.8 0 1 0 9.2 9.8" fill="none" stroke="#73599c" stroke-width="1.1" stroke-linecap="round" stroke-linejoin="round" /><path d="M11.4 5.2 H15 M13.2 3.4 V7 M11.4 10.8 H15 M13.2 9 V12.6" fill="none" stroke="#73599c" stroke-width="1.1" stroke-linecap="round" stroke-linejoin="round" /></svg>
<div class="t" style="left:188.4px;top:992.5px;height:36px;line-height:36px;letter-spacing:0.096px;color:#dfe1e5;">backup_homework.c</div>
<svg style="left:374.8px;top:998.5px;" width="24" height="24" viewBox="0 0 16 16"><path d="M4.2 4.2 L11.8 11.8 M11.8 4.2 L4.2 11.8" fill="none" stroke="#868a91" stroke-width="1.1" stroke-linecap="round" stroke-linejoin="round" /></svg>
<div style="left:61px;top:1038px;width:2438px;height:1px;background:#1e1f22;"></div>
<div style="left:139.8px;top:1035.4px;width:269.4px;height:3.8px;background:#5a5d63;border-radius:2px;"></div>
<div style="left:2427.4px;top:998.4px;width:3.2px;height:3.2px;border-radius:50%;background:#63666c;"></div>
<div style="left:2427.4px;top:1006.0px;width:3.2px;height:3.2px;border-radius:50%;background:#63666c;"></div>
<div style="left:2427.4px;top:1013.6px;width:3.2px;height:3.2px;border-radius:50%;background:#63666c;"></div>
<div style="left:2458px;top:1006.9px;width:19px;height:1.4px;background:#6f737a;"></div>
<svg style="left:80px;top:1052px;" width="26" height="26" viewBox="0 0 26 26"><path d="M19.5 6.5 V2.6 M19.5 6.8 H15.4 M19.2 6.4 Q15.8 2.8 11.4 3.4 Q4.2 4.8 4 12 Q4.2 18.4 9.6 20.2" fill="none" stroke="#ced0d6" stroke-width="1.5" stroke-linecap="round" stroke-linejoin="round" /><path d="M14.4 14.6 Q14.4 13.6 15.3 14.1 L22.8 18.6 Q23.4 19.1 22.8 19.7 L15.3 24.2 Q14.4 24.7 14.4 23.7 Z" fill="#253627" stroke="#5fad65" stroke-width="1.5" stroke-linejoin="round"/></svg>
<div style="left:122px;top:1056px;width:18px;height:18px;background:#5a5b5d;border-radius:3.5px;"></div>
<div style="left:155.4px;top:1050.5px;width:1.4px;height:29px;background:#43454a;"></div>
<div style="left:177.7px;top:1056.1px;width:3.8px;height:3.8px;border-radius:50%;background:#ced0d6;"></div>
<div style="left:177.7px;top:1063.3px;width:3.8px;height:3.8px;border-radius:50%;background:#ced0d6;"></div>
<div style="left:177.7px;top:1070.5px;width:3.8px;height:3.8px;border-radius:50%;background:#ced0d6;"></div>
<div style="left:61px;top:1091px;width:2438px;height:389px;background:#1e1f22;"></div>
<div style="left:61px;top:1091px;width:57px;height:389px;background:#2b2d30;"></div>
<div style="left:61px;top:1090.2px;width:57px;height:1.2px;background:#1e1f22;"></div>
<svg style="left:77px;top:1106px;" width="26" height="26" viewBox="0 0 26 26"><path d="M13 21 V5.6 M6.8 11.6 L13 5.4 L19.2 11.6" fill="none" stroke="#5a5d63" stroke-width="1.5" stroke-linecap="round" stroke-linejoin="round" /></svg>
<svg style="left:77px;top:1145px;" width="26" height="26" viewBox="0 0 26 26"><path d="M13 5 V20.4 M6.8 14.4 L13 20.6 L19.2 14.4" fill="none" stroke="#5a5d63" stroke-width="1.5" stroke-linecap="round" stroke-linejoin="round" /></svg>
<svg style="left:78px;top:1186px;" width="24" height="24" viewBox="0 0 26 26"><path d="M2.6 4 H23.4 M2.6 12.4 H20 Q24 12.8 24 16 Q24 19.4 20 19.6 H13 M2.6 20 H9 M16.4 16.2 L12.8 19.7 L16.4 23.2" fill="none" stroke="#ced0d6" stroke-width="1.5" stroke-linecap="round" stroke-linejoin="round" /></svg>
<svg style="left:78px;top:1223.5px;" width="24" height="24" viewBox="0 0 26 26"><path d="M2.6 5.4 H10.6 M2.6 12.4 H9 M2.6 23 H23.4 M17.6 3.4 V17.6 M12.4 12.6 L17.6 17.8 L22.8 12.6" fill="none" stroke="#ced0d6" stroke-width="1.5" stroke-linecap="round" stroke-linejoin="round" /></svg>
<svg style="left:78px;top:1263px;" width="24" height="24" viewBox="0 0 26 26"><path d="M7 9.6 V3.4 H19 V9.6 M7 19.6 H4.4 Q2.6 19.6 2.6 17.8 V11.8 Q2.6 9.8 4.6 9.8 H21.4 Q23.4 9.8 23.4 11.8 V17.8 Q23.4 19.6 21.6 19.6 H19 M7 15.6 H19 V23 H7 Z" fill="none" stroke="#ced0d6" stroke-width="1.5" stroke-linecap="round" stroke-linejoin="round" /><circle cx="19.6" cy="13" r="1" fill="#ced0d6"/></svg>
<svg style="left:78px;top:1301.5px;" width="24" height="24" viewBox="0 0 26 26"><path d="M3.6 7.6 H22.4 M9 7.2 Q9.4 3.2 13 3.2 Q16.6 3.2 17 7.2 M5.6 7.8 L6.4 21.4 Q6.6 23.4 8.6 23.4 H17.4 Q19.4 23.4 19.6 21.4 L20.4 7.8 M10.6 12 V19 M15.4 12 V19" fill="none" stroke="#ced0d6" stroke-width="1.5" stroke-linecap="round" stroke-linejoin="round" /></svg>
<div class="t" style="left:136px;top:1093.5px;height:33px;line-height:33px;font-size:20px;font-family:'Liberation Mono',monospace;color:#bcbec4;">C:\code\c\backup_homework.exe</div>
<div class="t" style="left:136px;top:1126.5px;height:33px;line-height:33px;font-size:20px;font-family:'Liberation Mono',monospace;color:#bcbec4;"><span class="cj">原始数组</span>: 1 2 3 4 5 6 7 8 9 10</div>
<div class="t" style="left:136px;top:1159.5px;height:33px;line-height:33px;font-size:20px;font-family:'Liberation Mono',monospace;color:#bcbec4;"><span class="cj">逆序后</span>: 10 9 8 7 6 5 4 3 2 1</div>
<div class="t" style="left:136px;top:1225.5px;height:33px;line-height:33px;font-size:20px;font-family:'Liberation Mono',monospace;color:#bcbec4;"><span class="cj">进程已结束，退出代码为</span> 0</div>
<!-- ===== status bar ===== -->
<div style="left:0px;top:1480px;width:2560px;height:1px;background:#1e1f22;"></div>
<div style="left:0px;top:1481px;width:2560px;height:47px;background:#2b2d30;"></div>
<div style="left:21.2px;top:1497.2px;width:11.8px;height:11.8px;border:1.6px solid #548af7;border-radius:3px;box-sizing:border-box;background:#25324d;"></div>
<div class="t" style="left:39.5px;top:1484.2px;height:36px;line-height:36px;color:#a2a5ad;">c</div>
<svg style="left:53.6px;top:1490.5px;" width="24" height="24" viewBox="0 0 16 16"><path d="M6 3.8 L10.2 8 L6 12.2" fill="none" stroke="#a2a5ad" stroke-width="1.2" stroke-linecap="round" stroke-linejoin="round" /></svg>
<svg style="left:84px;top:1490px;" width="24" height="24" viewBox="0 0 16 16"><path d="M7.9 0.9 L14.3 4.5 V11.5 L7.9 15.1 L1.5 11.5 V4.5 Z" stroke="#b58cf0" stroke-width="1.1" stroke-linecap="round" stroke-linejoin="round"  fill="#2b2535"/><path d="M10.3 6.1 A3 3 0 1 0 10.3 9.9" fill="none" stroke="#b58cf0" stroke-width="1.1" stroke-linecap="round" stroke-linejoin="round" /><rect x="0.6" y="0.5" width="6.1" height="5.7" rx="1.6" fill="#25324d" stroke="#548af7" stroke-width="1.1"/></svg>
<div class="t" style="left:115px;top:1484.2px;height:36px;line-height:36px;letter-spacing:0.073px;color:#a2a5ad;">backup_homework.c</div>
<div class="t" style="left:1697.9px;top:1486.1px;height:36px;line-height:36px;letter-spacing:0.481px;color:#a2a5ad;">.clang-tidy</div>
<div class="t" style="left:1814.9px;top:1486.1px;height:36px;line-height:36px;letter-spacing:-0.396px;color:#a2a5ad;">37:2</div>
<div class="t" style="left:1875.8px;top:1486.1px;height:36px;line-height:36px;letter-spacing:-2.006px;color:#a2a5ad;">CRLF</div>
<div class="t" style="left:1943.4px;top:1486.1px;height:36px;line-height:36px;letter-spacing:-0.486px;color:#a2a5ad;">UTF-8</div>
<svg style="left:2018px;top:1493px;" width="24" height="24" viewBox="0 0 16 16"><path d="M11.8 6.4 V2.4 Q11.8 1.6 11 1.6 H3 Q2.2 1.6 2.2 2.4 V12.6 Q2.2 13.4 3 13.4 H6.4 M4.6 4.6 H9.4 M4.6 7.2 H8 M4.6 9.8 H6.6" fill="none" stroke="#a2a5ad" stroke-width="1.1" stroke-linecap="round" stroke-linejoin="round" /><circle cx="10.6" cy="10.6" r="2.5" fill="none" stroke="#a2a5ad" stroke-width="1.1" stroke-linecap="round" stroke-linejoin="round" /><path d="M12.5 12.5 L14.6 14.6" fill="none" stroke="#a2a5ad" stroke-width="1.1" stroke-linecap="round" stroke-linejoin="round" /></svg>
<div class="t" style="left:2049.1px;top:1486.1px;height:36px;line-height:36px;font-size:18px;letter-spacing:0.261px;color:#a2a5ad;">4 个空格*</div>
<div class="t" style="left:2151.4px;top:1486.1px;height:36px;line-height:36px;letter-spacing:-0.042px;color:#6f737a;">C | backup_homework.c</div>
<svg style="left:2380px;top:1493px;" width="24" height="24" viewBox="0 0 16 16"><rect x="2.2" y="7.2" width="8.6" height="6.6" rx="1.4" fill="none" stroke="#ced0d6" stroke-width="1.1" stroke-linecap="round" stroke-linejoin="round" /><path d="M6.5 9.6 V11.4 M8.6 7 V4.8 Q8.8 2.4 11.2 2.4 Q13.6 2.4 13.8 4.8 V5.4" fill="none" stroke="#ced0d6" stroke-width="1.1" stroke-linecap="round" stroke-linejoin="round" /></svg>
<div style="left:2426.3px;top:1491.7px;width:107.2px;height:27px;border:2px solid #55955a;border-radius:14px;box-sizing:border-box;"></div>
<div class="t" style="left:2426.3px;top:1491.2px;height:27px;line-height:27px;font-size:15.5px;width:107.2px;text-align:center;color:#5fad65;">非商业用途</div>
<!-- ===== windows taskbar ===== -->
<div style="left:0px;top:1528px;width:2560px;height:72px;background:linear-gradient(90deg,#e9dadb 0,#e8d9da 10%,#ede3dd 17%,#ebe1de 24%,#e7dde3 33%,#e6dde5 48%,#ead9db 58%,#ecdcdb 75%,#e9dcdf 88%,#e8dde3 100%);"></div>
<div style="left:0px;top:1528px;width:2560px;height:1px;background:#cfc3c4;"></div>
<svg style="left:28px;top:1556px;" width="40" height="26" viewBox="0 0 40 26"><defs><linearGradient id="mo" x1="0" y1="0" x2="0" y2="1"><stop offset="0" stop-color="#f7b724"/><stop offset="1" stop-color="#f08a17"/></linearGradient></defs><path d="M2.5 8.5 Q14 16 24 10 Q31 5.5 33.5 0 Q38 8 32.5 17 Q25 25.5 14.5 22.5 Q5.5 19.5 2.5 8.5 Z" fill="url(#mo)"/></svg>
<div style="left:45.8px;top:1537.8px;width:23.2px;height:23.2px;border-radius:50%;background:#c42b1c;"></div>
<div class="t" style="left:45.8px;top:1537.3px;height:23.2px;line-height:23.2px;font-size:17px;font-weight:700;width:23.2px;text-align:center;color:#fff;">3</div>
<div class="t" style="left:76.4px;top:1535px;height:34px;line-height:34px;font-size:18.5px;letter-spacing:-1.011px;color:#1b1b1b;">22°C</div>
<div class="t" style="left:76.4px;top:1559px;height:34px;line-height:34px;font-size:17px;letter-spacing:0.000px;color:#5c5c5c;">晴朗</div>
<div style="left:765px;top:1547.5px;width:16.4px;height:16.4px;background:linear-gradient(135deg,#4cc2ff,#1a8fe6);border-radius:1.5px;"></div>
<div style="left:783px;top:1547.5px;width:16.4px;height:16.4px;background:linear-gradient(135deg,#2fa4f2,#0f7fdc);border-radius:1.5px;"></div>
<div style="left:765px;top:1565.5px;width:16.4px;height:16.4px;background:linear-gradient(135deg,#239bee,#0b78d6);border-radius:1.5px;"></div>
<div style="left:783px;top:1565.5px;width:16.4px;height:16.4px;background:linear-gradient(135deg,#1489e4,#0a6fd0);border-radius:1.5px;"></div>
<div style="left:820.5px;top:1541px;width:327.5px;height:46px;background:#f8f2f4;border:1.2px solid #d9cbd0;border-radius:23px;box-sizing:border-box;"></div>
<svg style="left:834px;top:1550px;" width="28" height="28" viewBox="0 0 28 28"><circle cx="12" cy="12" r="7.6" fill="none" stroke="#1f1f1f" stroke-width="2.4"/><path d="M17.6 17.6 L24 24" stroke="#1f1f1f" stroke-width="2.8" stroke-linecap="round"/></svg>
<div class="t" style="left:875px;top:1548px;height:36px;line-height:36px;font-size:20px;letter-spacing:1.000px;color:#5a5a5a;">搜索</div>
<svg style="left:1070px;top:1544px;" width="72" height="42" viewBox="0 0 72 42"><path d="M29 0 Q27 14 22 24" stroke="#505050" stroke-width="5" fill="none"/><path d="M40 0 Q44 12 52 22" stroke="#505050" stroke-width="5" fill="none"/><path d="M3 30 Q4 21 14 19 Q21 18 26 23 L27 33 Q25 39 18 38 Q6 37 3 30 Z" fill="#8d8d8d"/><path d="M20 22 L27 23 L27 33 L22 35 Z" fill="#6a6a6a"/><path d="M48 31 Q49 22 57 19 Q64 18 68 24 Q69 31 63 36 Q55 40 50 37 Z" fill="#9a9a9a"/><path d="M58 22 Q64 22 66 27 L61 34 L55 30 Z" fill="#777"/></svg>
<div style="left:1182px;top:1546.5px;width:21px;height:21px;background:linear-gradient(135deg,#fbfbfb,#dcdcdc);border-radius:3px;"></div>
<div style="left:1167px;top:1556.5px;width:27px;height:24px;background:linear-gradient(135deg,#3a3a3a,#141414);border-radius:3px;"></div>
<div style="left:1176px;top:1557px;width:20px;height:17px;background:linear-gradient(135deg,#e8e8e8,#bdbdbd);border-radius:2px;"></div>
<svg style="left:1232px;top:1546px;" width="38" height="36" viewBox="0 0 38 36"><path d="M1 5 Q1 2 4 2 H12 L16 6 H34 Q37 6 37 9 V14 H1 Z" fill="#e2a310"/><rect x="1" y="8" width="36" height="26" rx="3" fill="#fbc93a"/><path d="M1 30 H37 V31 Q37 34 34 34 H4 Q1 34 1 31 Z" fill="#e8b023"/><path d="M8 34 V27 Q8 24 11 24 H27 Q30 24 30 27 V34 Z" fill="#1f85e0"/><rect x="12" y="27.6" width="14" height="2.2" rx="1.1" fill="#0d5fb6"/></svg>
<svg style="left:1298.9px;top:1545.7px;" width="36.2" height="36.2" viewBox="0 0 36 36"><defs><linearGradient id="ed1" x1="0" y1="0" x2="0.6" y2="1"><stop offset="0" stop-color="#2fb8f0"/><stop offset="1" stop-color="#0a72d4"/></linearGradient><linearGradient id="ed2" x1="0" y1="0" x2="1" y2="0.35"><stop offset="0" stop-color="#38bdf2"/><stop offset="0.55" stop-color="#2fc5c6"/><stop offset="1" stop-color="#6fe24a"/></linearGradient></defs><path d="M1.5 11 A18 18 0 0 0 23 35.3 Q14 34 11 26 Q9 18 14 12 Q7 10 1.5 11 Z" fill="url(#ed1)"/><path d="M0.6 14 Q3 2 16 0.1 Q31 -0.5 35.6 14 Q37.4 22.5 30 24.6 Q24 25.4 21.2 22.8 Q23.6 20.4 22.4 16.6 Q19 10.6 11 11.6 Q3.6 13.4 1 22 Q-0.2 18 0.6 14 Z" fill="url(#ed2)"/><path d="M13.6 11.8 Q9.4 18 11.2 25.6 Q14 34 23 35.3 Q30 33.4 33.4 26.8 Q28 29.6 22 28.2 Q15.2 25.6 14 19.4 Q13.8 15.4 16.6 12.4 Z" fill="#1254a2"/></svg>
<svg style="left:1365px;top:1552.9px;" width="36" height="24" viewBox="0 0 36 24"><defs><linearGradient id="wpsg" x1="0.8" y1="0" x2="0.2" y2="1"><stop offset="0" stop-color="#ff9a2e"/><stop offset="1" stop-color="#fb3d16"/></linearGradient><linearGradient id="wpsr" x1="0" y1="0" x2="0" y2="1"><stop offset="0" stop-color="#fb2020"/><stop offset="1" stop-color="#fd4a12"/></linearGradient></defs><path fill="url(#wpsr)" fill-rule="evenodd" d="M1.5 0.3 H34.5 Q36.3 0.5 35.5 2.2 L25.6 22.6 Q24.2 24 22.9 22.6 L18.2 13.2 L13.4 22.6 Q12 24 10.7 22.6 L0.6 2.2 Q-0.2 0.5 1.5 0.3 Z M5.8 4.4 L11.9 15.3 L16.8 4.4 Z M23.6 4.8 L20.9 12.2 L24.6 16 L30.2 4.8 Z"/><polygon fill="url(#wpsg)" points="19.8,0.3 25,0.3 18.2,13.4 15.6,8.6"/><polygon fill="#d8150f" points="25,0.3 30,0.3 28,4.6 23,4.6"/></svg>
<div style="left:1431px;top:1546px;width:36.4px;height:36.4px;background:#fff;border-radius:7px;"></div>
<svg style="left:1431px;top:1546px;" width="36.4" height="36.4" viewBox="0 0 36 36"><ellipse cx="18" cy="20" rx="9.4" ry="11" fill="#111"/><ellipse cx="18" cy="23.5" rx="5.6" ry="6.6" fill="#fff"/><ellipse cx="18" cy="11.5" rx="6.6" ry="7" fill="#111"/><ellipse cx="15.6" cy="10" rx="1.5" ry="2.2" fill="#fff"/><ellipse cx="20.4" cy="10" rx="1.5" ry="2.2" fill="#fff"/><ellipse cx="18" cy="14.4" rx="3.6" ry="1.3" fill="#f5a623"/><path d="M10 17.5 Q18 21 26 17.5 L26.5 20 Q18 23.6 9.5 20 Z" fill="#e02020"/><path d="M12 19.6 L14.6 20.4 L13.6 25.6 L11 24.6 Z" fill="#e02020"/><ellipse cx="13" cy="31" rx="4.4" ry="1.7" fill="#f5a623"/><ellipse cx="23" cy="31" rx="4.4" ry="1.7" fill="#f5a623"/><path d="M8.6 17 Q5.4 22 7 26 Q9 24 9.6 21 Z M27.4 17 Q30.6 22 29 26 Q27 24 26.4 21 Z" fill="#111"/></svg>
<svg style="left:1497.8px;top:1547.2px;" width="34" height="34" viewBox="0 0 37 37"><defs><linearGradient id="st" x1="0.3" y1="0" x2="0.6" y2="1"><stop offset="0" stop-color="#1a2150"/><stop offset="0.45" stop-color="#1c3f78"/><stop offset="1" stop-color="#1287ba"/></linearGradient></defs><circle cx="18.5" cy="18.5" r="18.3" fill="url(#st)"/><circle cx="24.6" cy="13.6" r="6" fill="none" stroke="#fff" stroke-width="2.8"/><circle cx="24.6" cy="13.6" r="3.2" fill="#fdfdfe"/><path d="M0.3 16.8 L11.2 21.4 Q13.6 19.8 16.2 20.8 L19.6 15.8 L24.2 19.8 L18.8 23.4 Q18.8 28.6 13.8 29 Q9.8 28.6 9 24.8 L0.6 21.4 Z" fill="#fff"/><circle cx="13.8" cy="24.4" r="3" fill="none" stroke="#c9d6e6" stroke-width="1.3"/></svg>
<div style="left:1563px;top:1546px;width:36.6px;height:36.6px;background:#1a1f4b;border-radius:8.5px;"></div>
<svg style="left:1563px;top:1546px;" width="36.6" height="36.6" viewBox="0 0 36 36"><path d="M14.6 6.4 A10.7 10.7 0 1 0 20.6 6.4" fill="none" stroke="#16d9c6" stroke-width="2.5" stroke-linecap="round"/><path d="M15.2 26.6 L17.6 30.4 L20 26.6 Z" fill="#16d9c6"/><path d="M15.4 11.8 A5.7 5.7 0 1 0 19.8 11.8" fill="none" stroke="#16d9c6" stroke-width="2.3" stroke-linecap="round"/></svg>
<div style="left:1629px;top:1546px;width:36.4px;height:36.4px;background:#fc0d0d;border-radius:8.5px;"></div>
<svg style="left:1629px;top:1546px;" width="36.4" height="36.4" viewBox="0 0 36 36"><path d="M14.6 9.2 A10.4 10.4 0 1 0 27 13.6" fill="none" stroke="#fff" stroke-width="2.8" stroke-linecap="round"/><circle cx="17.8" cy="18.6" r="4" fill="none" stroke="#fff" stroke-width="2.6"/><path d="M21.6 18.4 L20.2 7.4 Q22.6 5.6 25.2 7.6" fill="none" stroke="#fff" stroke-width="2.6" stroke-linecap="round" stroke-linejoin="round"/></svg>
<div style="left:1683.3px;top:1534px;width:59.8px;height:59.5px;background:#eab1ac;border-radius:6px;"></div>
<div style="left:1695.2px;top:1546px;width:36px;height:36px;background:linear-gradient(#2ad765,#0fb953);border-radius:8px;"></div>
<svg style="left:1695.2px;top:1546px;" width="36" height="36" viewBox="0 0 36 36"><ellipse cx="14.4" cy="15" rx="9.4" ry="7.8" fill="#fff"/><path d="M8 20 L7 24.4 L12 21.8 Z" fill="#fff"/><ellipse cx="23.4" cy="22.4" rx="7.8" ry="6.4" fill="#fff" stroke="#1cc65b" stroke-width="1.2"/><path d="M27.6 27 L29 30.6 L24.6 28.6 Z" fill="#fff"/><circle cx="11" cy="12.8" r="1.2" fill="#1cc65b"/><circle cx="17.6" cy="12.8" r="1.2" fill="#1cc65b"/><circle cx="20.8" cy="21" r="1" fill="#1cc65b"/><circle cx="26" cy="21" r="1" fill="#1cc65b"/></svg>
<div style="left:1689.4px;top:1588.3px;width:47.6px;height:4.5px;background:#c42b1c;border-radius:2.3px;"></div>
<div style="left:1750.8px;top:1535.5px;width:56.4px;height:57.5px;background:#f6ecec;border-radius:6px;box-shadow:0 0 0 1px #e3d5d6;"></div>
<svg style="left:1760.5px;top:1546px;" width="37" height="37" viewBox="0 0 24 24"><defs><linearGradient id="clbt" x1="0.55" y1="0" x2="1" y2="0.1"><stop offset="0" stop-color="#0a98e6"/><stop offset="1" stop-color="#c24bb0"/></linearGradient></defs><path d="M21 7.2 L23.2 8.8 Q23.7 9.3 23.7 10 V21.6 Q23.6 23.2 22 23.35 H10 Q9 23.3 8.4 22.6 L7.4 21.6 Z" fill="#04d87c"/><path d="M13.9 0.27 L20.2 0 Q21.2 0.1 21.6 1.2 Q21.9 2 21.8 5.6 L9.4 20.4 L4.8 21.3 Q2.6 21.4 2.4 19.4 V15 Z" fill="#ff318c"/><path d="M1.2 2.4 L13.9 0.27 L2.56 14.4 L0.7 11.4 Q0.3 10.8 0.3 10 V3.6 Q0.3 2.6 1.2 2.4 Z" fill="url(#clbt)"/><rect x="4.83" y="4.5" width="14.3" height="14.2" fill="#000"/><path d="M10.7 7.6 A2.55 2.55 0 1 0 10.7 10.7" fill="none" stroke="#fff" stroke-width="1.2"/><path d="M13.2 6.6 V11.1 H15.9" fill="none" stroke="#fff" stroke-width="1.2"/><rect x="6.8" y="15.85" width="5.8" height="0.95" fill="#fff"/></svg>
<div style="left:1766.9px;top:1588.3px;width:24.4px;height:4.5px;background:#03b096;border-radius:2.3px;"></div>
<div style="left:1246.9px;top:1588.3px;width:9.2px;height:4.3px;background:#8e8889;border-radius:2.2px;"></div>
<div style="left:1312.9px;top:1588.3px;width:9.2px;height:4.3px;background:#8e8889;border-radius:2.2px;"></div>
<div style="left:1378.9px;top:1588.3px;width:9.2px;height:4.3px;background:#8e8889;border-radius:2.2px;"></div>
<div style="left:1444.9px;top:1588.3px;width:9.2px;height:4.3px;background:#8e8889;border-radius:2.2px;"></div>
<div style="left:1510.9px;top:1588.3px;width:9.2px;height:4.3px;background:#8e8889;border-radius:2.2px;"></div>
<div style="left:1576.9px;top:1588.3px;width:9.2px;height:4.3px;background:#8e8889;border-radius:2.2px;"></div>
<div style="left:1642.9px;top:1588.3px;width:9.2px;height:4.3px;background:#8e8889;border-radius:2.2px;"></div>
<svg style="left:2073px;top:1552px;" width="24" height="24" viewBox="0 0 24 24"><path d="M5 15.5 L12 8.5 L19 15.5" fill="none" stroke="#1b1b1b" stroke-width="2" stroke-linecap="round" stroke-linejoin="round"/></svg>
<svg style="left:2119px;top:1548px;" width="30" height="30" viewBox="0 0 30 30"><path d="M4 13 Q5 5 14 4.6 Q20 4.8 23 9 M23.4 3.6 V9.4 H17.6 M26 17 Q25 25 16 25.4 Q10 25.2 7 21 M6.6 26.4 V20.6 H12.4" fill="none" stroke="#1b1b1b" stroke-width="1.7" stroke-linecap="round" stroke-linejoin="round"/><circle cx="22" cy="22" r="5.6" fill="#1a73e8"/></svg>
<div class="t" style="left:2170.5px;top:1546px;height:36px;line-height:36px;font-size:21px;font-weight:700;color:#1b1b1b;">中</div>
<div style="left:2225.6px;top:1551.5px;width:24.8px;height:24.8px;border-radius:50%;background:#1fc05a;"></div>
<svg style="left:2225.6px;top:1551.5px;" width="24.8" height="24.8" viewBox="0 0 25 25"><path d="M9.6 19 L13 7 H16 Q19.4 7.4 18.6 10.8 Q17.6 13.8 14.4 13.8 H8 M6.4 11.4 H12" fill="none" stroke="#fff" stroke-width="2.3" stroke-linecap="round" stroke-linejoin="round"/></svg>
<svg style="left:2281px;top:1551px;" width="28" height="26" viewBox="0 0 28 26"><path d="M2.6 9.6 Q14 -0.4 25.4 9.6 M6.4 13.8 Q14 7 21.6 13.8 M10.2 17.8 Q14 14.6 17.8 17.8" fill="none" stroke="#1b1b1b" stroke-width="1.9" stroke-linecap="round"/><circle cx="14" cy="21.4" r="1.9" fill="#1b1b1b"/></svg>
<svg style="left:2317px;top:1551px;" width="28" height="26" viewBox="0 0 28 26"><path d="M2.6 9.4 H6.6 L12.2 4.4 V21.6 L6.6 16.6 H2.6 Z" fill="none" stroke="#1b1b1b" stroke-width="1.7" stroke-linejoin="round"/><path d="M15.6 9.6 Q17.6 13 15.6 16.4" fill="none" stroke="#1b1b1b" stroke-width="1.7" stroke-linecap="round"/><path d="M18.8 6.8 Q22.4 13 18.8 19.2" fill="none" stroke="#8a8485" stroke-width="1.7" stroke-linecap="round"/><path d="M22 4.4 Q27 13 22 21.6" fill="none" stroke="#bdb3b5" stroke-width="1.7" stroke-linecap="round"/></svg>
<svg style="left:2353px;top:1551px;" width="28" height="26" viewBox="0 0 28 26"><rect x="3.4" y="8" width="19" height="11.6" rx="2.4" fill="none" stroke="#1b1b1b" stroke-width="1.7"/><rect x="6" y="10.6" width="13.8" height="6.4" rx="1" fill="#1b1b1b"/><path d="M23.6 11.4 Q25.4 11.6 25.4 13.8 Q25.4 16 23.6 16.2 Z" fill="#1b1b1b"/><path d="M5.8 2.6 L2.6 8.6 H6 L3.4 13" fill="none" stroke="#1b1b1b" stroke-width="1.6" stroke-linejoin="round" stroke-linecap="round"/></svg>
<div class="t" style="left:2395.5px;top:1535px;height:34px;line-height:34px;font-size:18.4px;width:100px;text-align:right;color:#1b1b1b;">12:49</div>
<div class="t" style="left:2385.5px;top:1559px;height:34px;line-height:34px;font-size:18.4px;width:110px;text-align:right;color:#1b1b1b;">2025/11/18</div>
<svg style="left:2506px;top:1550px;" width="28" height="28" viewBox="0 0 28 28"><path d="M10.6 4.4 Q5.6 6 5.8 12.6 Q5.6 17 3.4 19.6 H20.6 Q18.8 17.4 18.4 14.6 M9.4 21.4 Q12 24.6 14.6 21.4 Z" fill="#1b1b1b" stroke="#1b1b1b" stroke-width="1.4" stroke-linejoin="round"/><path d="M12.4 8 H16.4 L12.4 12.8 H16.6 M18.6 2.6 H22.6 L18.6 7.4 H22.8" fill="none" stroke="#1b1b1b" stroke-width="1.7" stroke-linecap="round" stroke-linejoin="round"/></svg>
</div></body></html>
